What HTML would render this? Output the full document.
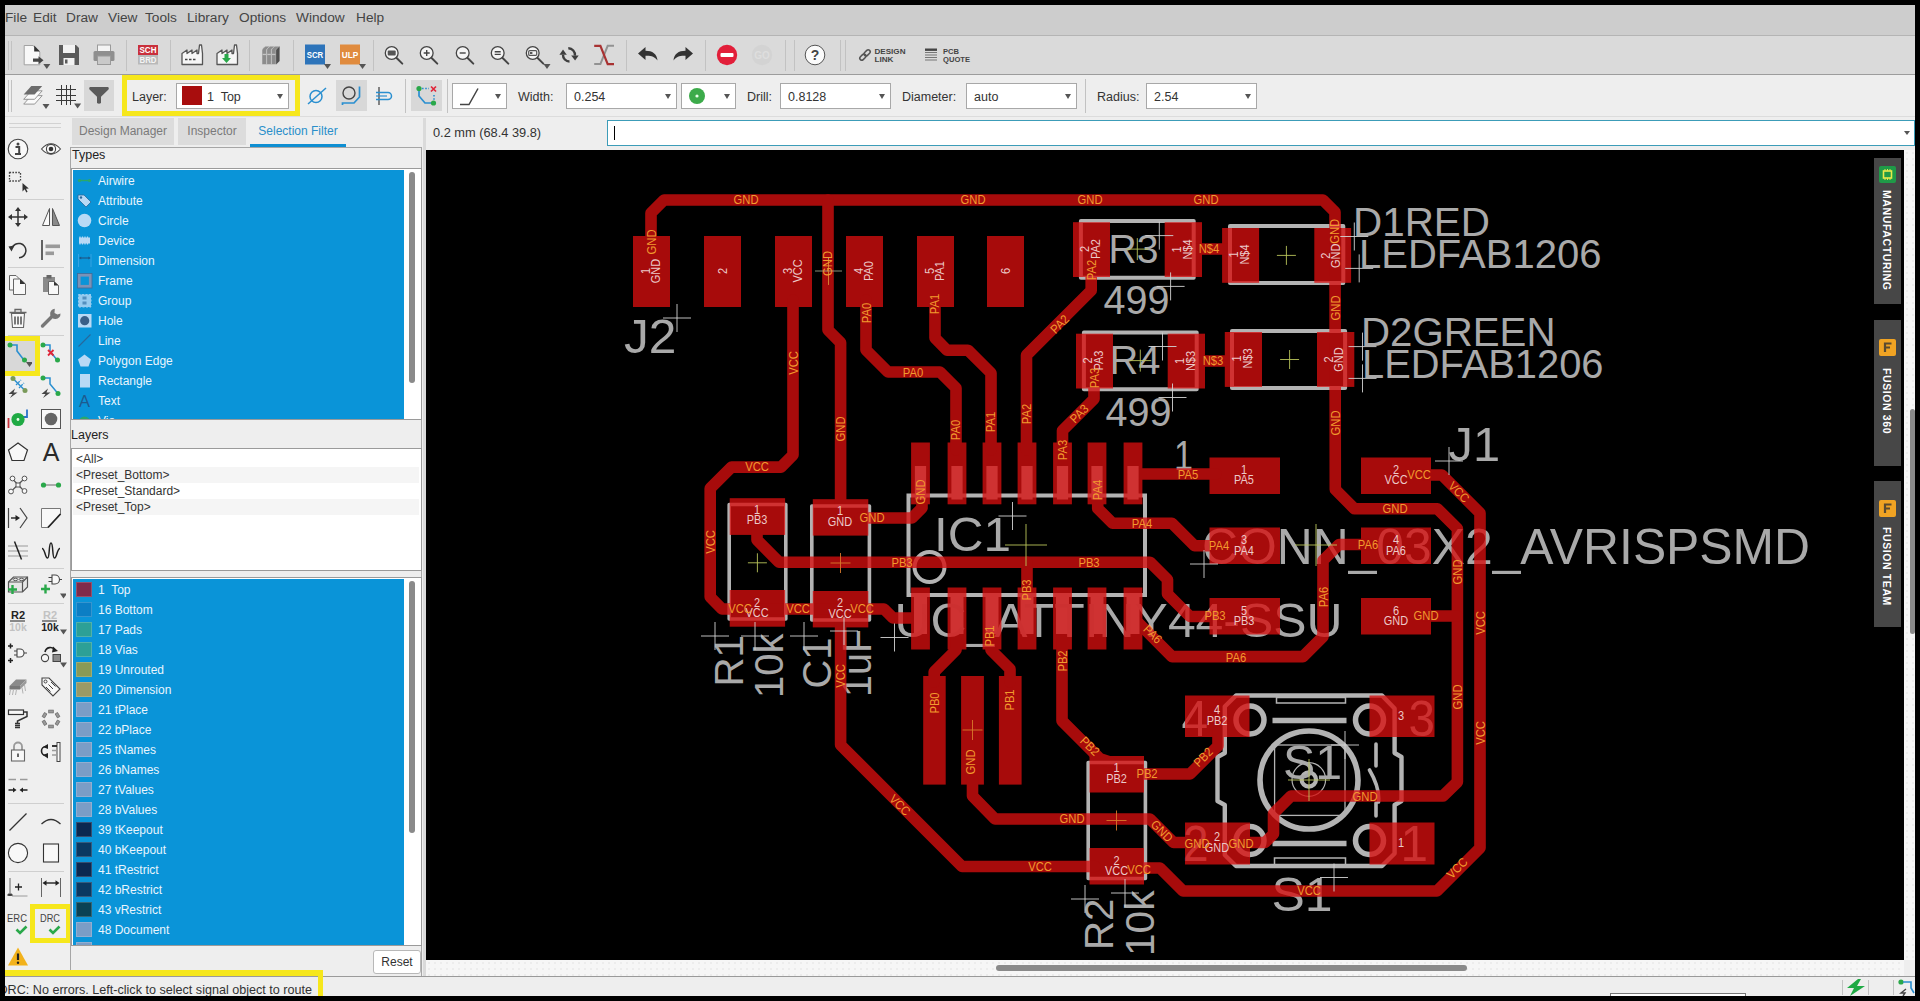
<!DOCTYPE html>
<html lang="en"><head><meta charset="utf-8"><title>EAGLE board editor</title>
<style>

html,body{margin:0;padding:0;background:#000;}
body{width:1920px;height:1001px;overflow:hidden;font-family:"Liberation Sans", sans-serif;font-size:12px;color:#333;}
#win{position:absolute;left:0;top:0;width:1920px;height:1001px;background:#000;overflow:hidden;}
.abs{position:absolute;}
.menubar{left:5px;top:5px;width:1910px;height:30px;background:#cdcdcd;}
.menubar span{position:absolute;top:4.5px;font-size:13.7px;color:#444;white-space:nowrap;}
.tb1{left:5px;top:35px;width:1910px;height:39px;background:#dadada;border-top:1px solid #b4b4b4;box-sizing:border-box;}
.tb2{left:5px;top:74px;width:1910px;height:43px;background:#eeeeee;border-top:1px solid #9c9c9c;border-bottom:1px solid #dcdcdc;box-sizing:border-box;}
.sep{position:absolute;width:1px;background:#c2c2c2;}
.ico{position:absolute;}
.combo{position:absolute;top:83px;height:26px;background:#fff;border:1px solid #a8a8a8;box-sizing:border-box;font-size:12.5px;line-height:26px;color:#333;}
.combo i{position:absolute;right:5px;top:10px;width:0;height:0;border-left:3.5px solid transparent;border-right:3.5px solid transparent;border-top:5px solid #555;}
.lbl{position:absolute;top:89.5px;font-size:12.5px;color:#333;white-space:nowrap;}
.pressed{position:absolute;background:#d8d8d8;}
.ybox{position:absolute;border:5px solid #f6e71c;box-sizing:border-box;}
.body{left:5px;top:117px;width:1910px;height:860px;background:#eeeeee;}
.palette{left:5px;top:117px;width:65px;height:860px;background:#efefef;}
.psep{position:absolute;left:8px;width:56px;height:1px;background:#cfcfcf;}
.tab{position:absolute;top:118px;height:27px;background:#dcdcdc;color:#7a7a7a;font-size:12px;line-height:26px;text-align:center;}
.list{position:absolute;background:#fff;border:1px solid #9a9a9a;box-sizing:border-box;overflow:hidden;}
.sel{position:absolute;left:1px;top:1px;width:331px;background:#0a94d8;}
.row{position:absolute;left:0;height:20px;line-height:20px;width:330px;color:#e9f5fd;font-size:12px;white-space:nowrap;}
.row b{position:absolute;left:2px;top:2px;width:15.5px;height:15px;font-weight:normal;}
.row span{position:absolute;left:24px;top:0;}
.thumb{position:absolute;width:6px;border-radius:3px;background:#8a8a8a;}
.prow{position:absolute;left:1px;width:346px;height:16px;line-height:16px;font-size:12px;color:#333;padding-left:3px;box-sizing:border-box;white-space:nowrap;}
.status{left:5px;top:976px;width:1910px;height:20px;background:#eeeeee;border-top:1px solid #9a9a9a;box-sizing:border-box;}
.vtab{position:absolute;left:1874px;width:27px;background:#474747;}
.vtab span{position:absolute;left:6px;top:0;transform-origin:0 0;transform:rotate(90deg) translate(0,-14px);color:#fff;font-weight:bold;font-size:10.5px;letter-spacing:0.6px;white-space:nowrap;line-height:14px;}
.dots{background-color:#f6f6f6;background-image:radial-gradient(#ececec 1px,transparent 1.3px);background-size:6px 6px;}
.frame{position:absolute;left:0;top:0;width:1920px;height:1001px;box-sizing:border-box;border:5px solid #000;border-bottom-width:5px;pointer-events:none;}

</style></head>
<body>
<div id="win">
<div class="abs body"></div><div class="abs menubar"><span style="left:0px">File</span><span style="left:28px">Edit</span><span style="left:61px">Draw</span><span style="left:103px">View</span><span style="left:140px">Tools</span><span style="left:182px">Library</span><span style="left:234px">Options</span><span style="left:291px">Window</span><span style="left:351px">Help</span></div><div class="abs tb1"></div><div class="sep" style="left:8px;top:41px;height:29px"></div><div class="sep" style="left:11px;top:41px;height:29px"></div><div class="sep" style="left:126px;top:40px;height:31px"></div><div class="sep" style="left:170px;top:40px;height:31px"></div><div class="sep" style="left:249px;top:40px;height:31px"></div><div class="sep" style="left:293px;top:40px;height:31px"></div><div class="sep" style="left:373px;top:40px;height:31px"></div><div class="sep" style="left:626px;top:40px;height:31px"></div><div class="sep" style="left:705px;top:40px;height:31px"></div><div class="sep" style="left:785px;top:40px;height:31px"></div><div class="sep" style="left:794px;top:40px;height:31px"></div><div class="sep" style="left:840px;top:40px;height:31px"></div><div class="sep" style="left:845px;top:40px;height:31px"></div><svg class="ico" style="left:16.0px;top:41.0px" width="36" height="30" viewBox="-18.0 -15.0 36 30"><path d="M-9.8 -10.5H-1L5.8 -4V8.8H-9.8z" fill="#f8f8f8" stroke="#9a9a9a" stroke-width="0.9"/><path d="M0.2 -10.5V-4.6H6z" fill="#333"/><path d="M-1 2.6H4.5V0.2L9.5 4.2 4.5 8.2V5.8H-1z" fill="#444"/><path d="M9.3 8h7l-3.5 5z" fill="#555"/></svg><svg class="ico" style="left:56.0px;top:42.0px" width="26" height="26" viewBox="-13.0 -13.0 26 26"><path d="M-10 -10H7L10 -7V10H-10z" fill="#5a5a5a"/><rect x="-6" y="-10" width="12" height="8" fill="#f2f2f2"/><rect x="-5.5" y="3" width="11" height="7" fill="#f2f2f2"/><rect x="-4" y="4.5" width="2.5" height="4" fill="#5a5a5a"/></svg><svg class="ico" style="left:90.0px;top:42.0px" width="28" height="26" viewBox="-14.0 -13.0 28 26"><rect x="-6.5" y="-10" width="13" height="7" fill="#f4f4f4" stroke="#9a9a9a" stroke-width="1"/><rect x="-10.5" y="-4" width="21" height="10" rx="1.5" fill="#8f8f8f"/><rect x="-6.5" y="1" width="13" height="8.5" fill="#c9c9c9" stroke="#9a9a9a" stroke-width="1"/></svg><svg class="ico" style="left:137.0px;top:44.0px" width="22" height="22" viewBox="-11.0 -11.0 22 22"><rect x="-10" y="-10" width="20" height="10" fill="#c9303c"/><rect x="-10" y="0" width="20" height="9.5" fill="#b9b9b9"/><text x="0" y="-1.6" font-family="Liberation Sans, sans-serif" font-size="8.6" font-weight="bold" fill="#fff" text-anchor="middle" textLength="17" lengthAdjust="spacingAndGlyphs">SCH</text><text x="0" y="8" font-family="Liberation Sans, sans-serif" font-size="8.6" font-weight="bold" fill="#f4f4f4" text-anchor="middle" textLength="17" lengthAdjust="spacingAndGlyphs">BRD</text></svg><svg class="ico" style="left:179.0px;top:42.0px" width="26" height="26" viewBox="-13.0 -13.0 26 26"><path d="M-10 9.5V-1.5L-5 -5V-1.5L0 -5V-1.5L5 -5V-1.5H6.5L7.5 -10H9.5L10.5 -1.5V9.5z" fill="#f6f6f6" stroke="#555" stroke-width="1.3" stroke-linejoin="round"/><path d="M-7 4.5H-4.5M-3 4.5H-0.5M1 4.5H3.5" stroke="#444" stroke-width="1.6"/></svg><svg class="ico" style="left:214.0px;top:42.0px" width="26" height="26" viewBox="-13.0 -13.0 26 26"><path d="M-10 9.5V-1.5L-5 -5V-1.5L0 -5V-1.5L5 -5V-1.5H6.5L7.5 -10H9.5L10.5 -1.5V9.5z" fill="#f6f6f6" stroke="#555" stroke-width="1.3" stroke-linejoin="round"/><path d="M-2.5 -1H1.5V3H4L-0.5 8-5 3H-2.5z" fill="#2aa84a"/></svg><svg class="ico" style="left:258.0px;top:43.0px" width="26" height="26" viewBox="-13.0 -13.0 26 26"><path d="M-9 -5.5Q-9 -7 -7.8 -8L-5.5 -9.8H-0.8000000000000007L-4.3 -6.3V8.5H-9z" fill="#8c8c8c" stroke="#d9d9d9" stroke-width="0.5"/><rect x="-8.4" y="-2.2" width="3.5" height="1.3" fill="#c4c4c4"/><path d="M-4.3 -5.5Q-4.3 -7 -3.0999999999999996 -8L-0.7999999999999998 -9.8H3.8999999999999995L0.40000000000000036 -6.3V8.5H-4.3z" fill="#8c8c8c" stroke="#d9d9d9" stroke-width="0.5"/><rect x="-3.6999999999999997" y="-2.2" width="3.5" height="1.3" fill="#c4c4c4"/><path d="M0.4 -5.5Q0.4 -7 1.6 -8L3.9 -9.8H8.6L5.1000000000000005 -6.3V8.5H0.4z" fill="#8c8c8c" stroke="#d9d9d9" stroke-width="0.5"/><rect x="1.0" y="-2.2" width="3.5" height="1.3" fill="#c4c4c4"/><path d="M5.1 -6.3L8.6 -9.8V5L5.1 8.5z" fill="#4f4f4f"/></svg><svg class="ico" style="left:297.0px;top:40.0px" width="36" height="30" viewBox="-18.0 -15.0 36 30"><rect x="-10" y="-10.5" width="20" height="20" fill="#2d74ba"/><text x="0" y="3.2" font-family="Liberation Sans, sans-serif" font-size="9" font-weight="bold" fill="#fff" text-anchor="middle" textLength="16.5" lengthAdjust="spacingAndGlyphs">SCR</text><path d="M9.0 9h7l-3.5 5z" fill="#555"/></svg><svg class="ico" style="left:332.0px;top:40.0px" width="36" height="30" viewBox="-18.0 -15.0 36 30"><rect x="-10" y="-10.5" width="20" height="20" fill="#e08b3e"/><text x="0" y="3.2" font-family="Liberation Sans, sans-serif" font-size="9" font-weight="bold" fill="#fff" text-anchor="middle" textLength="16.5" lengthAdjust="spacingAndGlyphs">ULP</text><path d="M9.0 9h7l-3.5 5z" fill="#555"/></svg><svg class="ico" style="left:376.0px;top:40.0px" width="34" height="30" viewBox="-17.0 -15.0 34 30"><circle cx="-1.3" cy="-2" r="6.4" fill="#f4f4f4" stroke="#444" stroke-width="1.3"/><path d="M3.6 3L9.3 8.6" stroke="#444" stroke-width="2" stroke-linecap="round"/><rect x="-5.3" y="-4.6" width="8" height="5" rx="1" fill="#555"/></svg><svg class="ico" style="left:411.0px;top:40.0px" width="34" height="30" viewBox="-17.0 -15.0 34 30"><circle cx="-1.3" cy="-2" r="6.4" fill="#f4f4f4" stroke="#444" stroke-width="1.3"/><path d="M3.6 3L9.3 8.6" stroke="#444" stroke-width="2" stroke-linecap="round"/><path d="M-4.3 -2h6M-1.3 -5v6" stroke="#444" stroke-width="1.4"/></svg><svg class="ico" style="left:447.0px;top:40.0px" width="34" height="30" viewBox="-17.0 -15.0 34 30"><circle cx="-1.3" cy="-2" r="6.4" fill="#f4f4f4" stroke="#444" stroke-width="1.3"/><path d="M3.6 3L9.3 8.6" stroke="#444" stroke-width="2" stroke-linecap="round"/><path d="M-4.3 -2h6" stroke="#444" stroke-width="1.4"/></svg><svg class="ico" style="left:482.0px;top:40.0px" width="34" height="30" viewBox="-17.0 -15.0 34 30"><circle cx="-1.3" cy="-2" r="6.4" fill="#f4f4f4" stroke="#444" stroke-width="1.3"/><path d="M3.6 3L9.3 8.6" stroke="#444" stroke-width="2" stroke-linecap="round"/><path d="M-4.3 -3.3h6M-4.3 -0.6h6" stroke="#444" stroke-width="1.4"/></svg><svg class="ico" style="left:517.0px;top:40.0px" width="34" height="30" viewBox="-17.0 -15.0 34 30"><circle cx="-1.3" cy="-2" r="6.4" fill="#f4f4f4" stroke="#444" stroke-width="1.3"/><path d="M3.6 3L9.3 8.6" stroke="#444" stroke-width="2" stroke-linecap="round"/><rect x="-5.3" y="-4.4" width="8" height="4.8" rx="1" fill="none" stroke="#555" stroke-width="1.2"/><rect x="-4" y="-3" width="2.4" height="2" fill="#555"/><path d="M9.5 9h7l-3.5 5z" fill="#555"/></svg><svg class="ico" style="left:556.0px;top:42.3px" width="26" height="26" viewBox="-13.0 -13.0 26 26"><path d="M0.5 6.5A6.5 6.5 0 0 1 -6 -0.2" fill="none" stroke="#3f3f3f" stroke-width="2.4"/><path d="M-9.6 -0.3L-6 -5.6 -2.2 -0.3z" fill="#3f3f3f"/><path d="M-0.7 -6.7A6.5 6.5 0 0 1 5.9 0.6" fill="none" stroke="#3f3f3f" stroke-width="2.4"/><path d="M2.2 0.4L9.7 0.4 6.1 5.4z" fill="#3f3f3f"/></svg><svg class="ico" style="left:591.0px;top:42.0px" width="26" height="26" viewBox="-13.0 -13.0 26 26"><path d="M-9.8 9.1H-3.6L3.7 -9.2H10" fill="none" stroke="#929292" stroke-width="2"/><path d="M-9.8 -9.2H-3.6L3.7 9.1H10" fill="none" stroke="#a83232" stroke-width="2.2"/></svg><svg class="ico" style="left:635.0px;top:44.0px" width="26" height="22" viewBox="-13.0 -11.0 26 22"><g><path d="M-10 -1.5L-2.5 -8V-4.2C4.5 -4.2 9 -1 9.5 5.5 6.5 1.5 3 0.5 -2.5 0.8V5z" fill="#333"/></g></svg><svg class="ico" style="left:670.0px;top:44.0px" width="26" height="22" viewBox="-13.0 -11.0 26 22"><g transform="scale(-1,1)"><path d="M-10 -1.5L-2.5 -8V-4.2C4.5 -4.2 9 -1 9.5 5.5 6.5 1.5 3 0.5 -2.5 0.8V5z" fill="#333"/></g></svg><svg class="ico" style="left:715.0px;top:43.0px" width="24" height="24" viewBox="-12.0 -12.0 24 24"><circle r="10.2" fill="#e21f3a"/><rect x="-6.5" y="-2" width="13" height="4" rx="1" fill="#fff"/></svg><svg class="ico" style="left:750.0px;top:43.0px" width="24" height="24" viewBox="-12.0 -12.0 24 24"><circle r="10.2" fill="#d3d3d3"/><text x="0" y="3.6" font-family="Liberation Sans, sans-serif" font-size="10" font-weight="bold" fill="#dedede" text-anchor="middle">GO</text></svg><svg class="ico" style="left:803.0px;top:43.0px" width="24" height="24" viewBox="-12.0 -12.0 24 24"><circle r="9.8" fill="#fbfbfb" stroke="#555" stroke-width="1"/><text x="0" y="5" font-family="Liberation Sans, sans-serif" font-size="14" font-weight="bold" fill="#444" text-anchor="middle">?</text></svg><svg class="ico" style="left:852.0px;top:43.0px" width="70" height="24" viewBox="-35.0 -12.0 70 24"><g transform="translate(-22,0) rotate(-45)" fill="none" stroke="#555" stroke-width="1.5"><rect x="-6.5" y="-2" width="7" height="4" rx="2"/><rect x="-0.5" y="-2" width="7" height="4" rx="2"/></g><text x="-12.5" y="-0.8" font-family="Liberation Sans, sans-serif" font-size="7.6" font-weight="bold" fill="#444" textLength="31" lengthAdjust="spacingAndGlyphs">DESIGN</text><text x="-12.5" y="6.6" font-family="Liberation Sans, sans-serif" font-size="7.6" font-weight="bold" fill="#444" textLength="19" lengthAdjust="spacingAndGlyphs">LINK</text></svg><svg class="ico" style="left:919.0px;top:43.0px" width="64" height="24" viewBox="-32.0 -12.0 64 24"><g transform="translate(-20,0)"><rect x="-6" y="-6.5" width="12" height="2.4" fill="#444"/><path d="M-6 -2.5h12M-6 0h12M-6 2.5h12M-6 5h12" stroke="#777" stroke-width="1"/></g><text x="-8" y="-0.8" font-family="Liberation Sans, sans-serif" font-size="7.6" font-weight="bold" fill="#444" textLength="16" lengthAdjust="spacingAndGlyphs">PCB</text><text x="-8" y="6.6" font-family="Liberation Sans, sans-serif" font-size="7.6" font-weight="bold" fill="#444" textLength="27" lengthAdjust="spacingAndGlyphs">QUOTE</text></svg><div class="abs tb2"></div><div class="sep" style="left:8px;top:80px;height:32px"></div><div class="sep" style="left:11px;top:80px;height:32px"></div><div class="sep" style="left:405px;top:79px;height:34px"></div><div class="sep" style="left:447px;top:79px;height:34px"></div><div class="sep" style="left:1085px;top:79px;height:34px"></div><div class="pressed" style="left:84px;top:80px;width:30px;height:31px"></div><div class="pressed" style="left:336px;top:80px;width:31px;height:31px"></div><div class="pressed" style="left:411px;top:80px;width:31px;height:31px"></div><svg class="ico" style="left:16.0px;top:81.0px" width="34" height="30" viewBox="-17.0 -15.0 34 30"><path d="M-9.3 -1.5L-1.7 -10H9.2L1.6 -1.5z" transform="translate(0,9.6)" fill="#fafafa" stroke="#8c8c8c" stroke-width="0.9"/><path d="M-9.3 -1.5L-1.7 -10H9.2L1.6 -1.5z" transform="translate(0,4.8)" fill="#fafafa" stroke="#8c8c8c" stroke-width="0.9"/><path d="M-9.3 -1.5L-1.7 -10H9.2L1.6 -1.5z" fill="#6c6c6c"/><path d="M9.5 8h7l-3.5 5z" fill="#555"/></svg><svg class="ico" style="left:49.400000000000006px;top:80.4px" width="34" height="30" viewBox="-17.0 -15.0 34 30"><path d="M-4.9 -10V10M0 -10V10M4.9 -10V10M-10 -5.2H9.5M-10 0H9.5M-10 5H9.5" stroke="#3a3a3a" stroke-width="1" shape-rendering="crispEdges"/><path d="M8.1 8.6h7l-3.5 5z" fill="#555"/></svg><svg class="ico" style="left:86.0px;top:83.0px" width="26" height="26" viewBox="-13.0 -13.0 26 26"><path d="M-9 -9H9Q10.5 -8.5 9.5 -6.5L2 0.8V7Q0 8.3 -2 7V0.8L-9.5 -6.5Q-10.5 -8.5 -9 -9z" fill="#5a5a5a"/></svg><div class="ybox" style="left:122px;top:75px;width:178px;height:41px"></div><div class="lbl" style="left:132px">Layer:</div><div class="combo" style="left:176px;width:113px"><span style="position:absolute;left:7px"></span><b style="position:absolute;left:5px;top:2px;width:20px;height:19px;background:#a80d0d"></b><span style="position:absolute;left:30px">1&nbsp; Top</span><i></i></div><svg class="ico" style="left:304.0px;top:83.0px" width="26" height="26" viewBox="-13.0 -13.0 26 26"><circle cx="-1" cy="0.5" r="6" fill="none" stroke="#2a8fd0" stroke-width="1.5"/><path d="M-9 8L9 -8" stroke="#2a8fd0" stroke-width="1.5"/></svg><svg class="ico" style="left:338.0px;top:83.0px" width="26" height="26" viewBox="-13.0 -13.0 26 26"><circle cx="-2" cy="-3" r="6" fill="none" stroke="#444" stroke-width="1.4"/><path d="M8.5 -9.5V1L3 7H-8.5V9" fill="none" stroke="#2a8fd0" stroke-width="1.7"/></svg><svg class="ico" style="left:371.0px;top:83.0px" width="26" height="26" viewBox="-13.0 -13.0 26 26"><path d="M-5 -9V9" stroke="#555" stroke-width="1.4"/><path d="M-8 -3.5H4A3.5 3.5 0 0 1 4 3.5H-8" fill="none" stroke="#2a8fd0" stroke-width="1.5"/><path d="M-8 0H3" stroke="#2a8fd0" stroke-width="1.2"/></svg><svg class="ico" style="left:412.0px;top:82.0px" width="28" height="28" viewBox="-14.0 -14.0 28 28"><path d="M-7 -7V0L-1 7H7" fill="none" stroke="#2a8fd0" stroke-width="1.7"/><path d="M-4 -7.5H3M8 -1V4" stroke="#2a8fd0" stroke-width="1.6" stroke-dasharray="1.6 1.6"/><circle cx="-7" cy="-7.5" r="2.6" fill="#2aa84a"/><circle cx="7.5" cy="7" r="2.6" fill="#2aa84a"/><path d="M5 -9.5L10 -4.5M10 -9.5L5 -4.5" stroke="#e0263a" stroke-width="1.7"/></svg><div class="combo" style="left:452px;width:55px"><span style="position:absolute;left:7px"></span><svg style="position:absolute;left:5px;top:3px" width="28" height="19"><path d="M2 17.5H11L20 1.5" fill="none" stroke="#444" stroke-width="1.5"/></svg><i></i></div><div class="lbl" style="left:518px">Width:</div><div class="combo" style="left:566px;width:111px"><span style="position:absolute;left:7px">0.254</span><i></i></div><div class="combo" style="left:681px;width:55px"><span style="position:absolute;left:7px"></span><svg style="position:absolute;left:6px;top:3px" width="18" height="18"><circle cx="9" cy="9" r="8" fill="#3cab4a"/><circle cx="9" cy="9" r="1.6" fill="#e8ffe8"/></svg><i></i></div><div class="lbl" style="left:747px">Drill:</div><div class="combo" style="left:780px;width:111px"><span style="position:absolute;left:7px">0.8128</span><i></i></div><div class="lbl" style="left:902px">Diameter:</div><div class="combo" style="left:966px;width:111px"><span style="position:absolute;left:7px">auto</span><i></i></div><div class="lbl" style="left:1097px">Radius:</div><div class="combo" style="left:1146px;width:111px"><span style="position:absolute;left:7px">2.54</span><i></i></div><div class="abs palette"></div><div class="psep" style="left:9px;width:52px;top:123px;background:#d2d2d2"></div><div class="psep" style="left:9px;width:52px;top:127px;background:#d2d2d2"></div><div class="psep" style="top:199px"></div><div class="psep" style="top:267px"></div><div class="psep" style="top:335px"></div><div class="psep" style="top:568px"></div><div class="psep" style="top:603px"></div><div class="psep" style="top:803px"></div><div class="psep" style="top:871px"></div><div class="pressed" style="left:5px;top:340px;width:30px;height:31px"></div><div class="ybox" style="left:0px;top:336px;width:40px;height:40px"></div><div class="ybox" style="left:30px;top:904px;width:41px;height:39px"></div><svg class="ico" style="left:6.0px;top:137.0px" width="24" height="24" viewBox="-12.0 -12.0 24 24"><circle r="9.8" fill="#f8f8f8" stroke="#444" stroke-width="1.1"/><circle cx="0" cy="-5" r="1.5" fill="#444"/><path d="M-2.5 -2H1.2V4.5M-3 5h6" fill="none" stroke="#444" stroke-width="2"/></svg><svg class="ico" style="left:39.0px;top:137.0px" width="24" height="24" viewBox="-12.0 -12.0 24 24"><path d="M-9.5 0Q0 -10.5 9.5 0Q0 10.5 -9.5 0z" fill="#f8f8f8" stroke="#444" stroke-width="1.1"/><circle r="4.6" fill="none" stroke="#444" stroke-width="1.1"/><circle r="2.3" fill="#333"/></svg><svg class="ico" style="left:6.0px;top:169.0px" width="24" height="24" viewBox="-12.0 -12.0 24 24"><rect x="-8.5" y="-8.5" width="11" height="8.5" fill="none" stroke="#444" stroke-width="1.3" stroke-dasharray="1.6 1.3"/><path d="M4.5 2L4.5 10.5 6.7 8.3 8.3 11.5 9.6 10.8 8 7.8 10.8 7.6z" fill="#333"/></svg><svg class="ico" style="left:6.0px;top:205.0px" width="24" height="24" viewBox="-12.0 -12.0 24 24"><path d="M-7 0H7M0 -7V7" stroke="#333" stroke-width="1.5"/><path d="M-10 0L-6 -3V3zM10 0L6 -3V3zM0 -10L-3 -6H3zM0 10L-3 6H3z" fill="#333"/></svg><svg class="ico" style="left:39.0px;top:205.0px" width="24" height="24" viewBox="-12.0 -12.0 24 24"><path d="M-1.5 -8.5V8.5H-8.5z" fill="#fafafa" stroke="#555" stroke-width="1"/><path d="M1.5 -8.5V8.5H8.5z" fill="#8a8a8a" stroke="#555" stroke-width="1"/></svg><svg class="ico" style="left:6.0px;top:238.0px" width="24" height="24" viewBox="-12.0 -12.0 24 24"><path d="M-6 -2A7.2 7.2 0 1 1 1 7.8" fill="none" stroke="#333" stroke-width="1.5"/><path d="M-9.5 -3.5L-3.5 -4.5 -6.5 1.5z" fill="#333"/></svg><svg class="ico" style="left:39.0px;top:238.0px" width="24" height="24" viewBox="-12.0 -12.0 24 24"><path d="M-9 -10V10" stroke="#333" stroke-width="1.5"/><rect x="-5.5" y="-5.5" width="14.5" height="3.6" fill="#9a9a9a"/><rect x="-5.5" y="1.5" width="8.5" height="3.6" fill="#9a9a9a"/></svg><svg class="ico" style="left:6.0px;top:273.0px" width="24" height="24" viewBox="-12.0 -12.0 24 24"><path d="M-8.5 -9.5H-2L1 -6.5V5H-8.5z" fill="#f8f8f8" stroke="#666" stroke-width="1"/><path d="M-4.5 -6H2L7.5 -1V9.5H-4.5z" fill="#f8f8f8" stroke="#666" stroke-width="1"/><path d="M2 -6V-1H7.5z" fill="#333"/></svg><svg class="ico" style="left:39.0px;top:273.0px" width="24" height="24" viewBox="-12.0 -12.0 24 24"><rect x="-8" y="-8" width="12" height="15" fill="#8a8a8a"/><rect x="-4.5" y="-10" width="5" height="3.5" fill="#666"/><path d="M-2.5 -3.5H3L7.5 0.5V9.5H-2.5z" fill="#f8f8f8" stroke="#666" stroke-width="1"/><path d="M3 -3.5V0.5H7.5z" fill="#333"/></svg><svg class="ico" style="left:6.0px;top:306.0px" width="24" height="24" viewBox="-12.0 -12.0 24 24"><path d="M-6.5 -4.5L-5.5 9.5H5.5L6.5 -4.5z" fill="#f8f8f8" stroke="#666" stroke-width="1.1"/><path d="M-8.5 -5.5H8.5M-3 -5.5V-8.5H3V-5.5" fill="none" stroke="#666" stroke-width="1.3"/><path d="M-3 -1.5V6.5M0 -1.5V6.5M3 -1.5V6.5" stroke="#444" stroke-width="1.4"/></svg><svg class="ico" style="left:39.0px;top:306.0px" width="24" height="24" viewBox="-12.0 -12.0 24 24"><path d="M-8.5 8L2 -2.5" stroke="#777" stroke-width="3.4" stroke-linecap="round"/><path d="M9.5 -4.5A5.2 5.2 0 1 1 3.8 -9.3L3.5 -5 6.5 -3.5z" fill="#777"/></svg><svg class="ico" style="left:4.0px;top:340.0px" width="28" height="28" viewBox="-14.0 -14.0 28 28"><path d="M-8 -9H-1V-3L5.5 5.5" fill="none" stroke="#2a8fd0" stroke-width="1.6"/><circle cx="-8" cy="-9" r="2.5" fill="#2aa84a"/><circle cx="6.5" cy="6" r="2.5" fill="#2aa84a"/><path d="M8.0 8h7l-3.5 5z" fill="#555"/></svg><svg class="ico" style="left:37.0px;top:340.0px" width="28" height="28" viewBox="-14.0 -14.0 28 28"><path d="M-8 -9H-1V-3L6 6" fill="none" stroke="#2a8fd0" stroke-width="1.5"/><circle cx="-8" cy="-9" r="2.5" fill="#2aa84a"/><circle cx="6.5" cy="6" r="2.5" fill="#2aa84a"/><path d="M-3 -4L2.5 1.5M2.5 -4L-3 1.5" stroke="#e0263a" stroke-width="1.8"/></svg><svg class="ico" style="left:4.0px;top:372.0px" width="28" height="28" viewBox="-14.0 -14.0 28 28"><path d="M-4.5 -7L6 3.5" stroke="#2a8fd0" stroke-width="1.5"/><path d="M-2 -1L3 -6M1 2L6 -3" stroke="#2a8fd0" stroke-width="1.3" stroke-dasharray="2 1.2"/><circle cx="-5" cy="-7.5" r="2.5" fill="#7a9a5a"/><circle cx="7" cy="4.5" r="2.5" fill="#7a9a5a"/><path d="M-3 2.5L-9.5 8H-5.5L-8 12 -0.5 6.5H-4.5z" fill="#444"/></svg><svg class="ico" style="left:37.0px;top:372.0px" width="28" height="28" viewBox="-14.0 -14.0 28 28"><path d="M-8 -8H-1V-2L6.5 7" fill="none" stroke="#2a8fd0" stroke-width="1.5"/><circle cx="-8" cy="-8" r="2.5" fill="#2aa84a"/><circle cx="7" cy="7.5" r="2.5" fill="#2aa84a"/><path d="M-3 2.5L-9.5 8H-5.5L-8 12 -0.5 6.5H-4.5z" fill="#444"/></svg><svg class="ico" style="left:5.0px;top:406.0px" width="26" height="26" viewBox="-13.0 -13.0 26 26"><path d="M9 -9.5V-2H5" fill="none" stroke="#2a72c8" stroke-width="1.8"/><path d="M-9.5 -1V9" stroke="#c8323c" stroke-width="1.8"/><circle cx="0" cy="0.5" r="6.6" fill="#1faa44"/><circle cx="0" cy="0.5" r="1.4" fill="#e8ffe8"/></svg><svg class="ico" style="left:39.0px;top:407.0px" width="24" height="24" viewBox="-12.0 -12.0 24 24"><rect x="-9.5" y="-9.5" width="19" height="19" fill="#f8f8f8" stroke="#555" stroke-width="1"/><circle r="6.3" fill="#666"/></svg><svg class="ico" style="left:6.0px;top:440.0px" width="24" height="24" viewBox="-12.0 -12.0 24 24"><path d="M0 -9L9.5 -2 6 8.5H-6L-9.5 -2z" fill="#f8f8f8" stroke="#333" stroke-width="1.2"/></svg><svg class="ico" style="left:38.0px;top:439.0px" width="26" height="26" viewBox="-13.0 -13.0 26 26"><text x="0" y="9" font-family="Liberation Sans, sans-serif" font-size="25" font-weight="normal" fill="#2a2a2a" text-anchor="middle" >A</text></svg><svg class="ico" style="left:6.0px;top:473.0px" width="24" height="24" viewBox="-12.0 -12.0 24 24"><path d="M-6 -6.5L6 6M6.5 -6.5L-7 6.5" stroke="#555" stroke-width="1.2"/><circle cx="-5.5" cy="-6.5" r="2.4" fill="#f8f8f8" stroke="#555"/><circle cx="6.5" cy="-6.5" r="2.4" fill="#f8f8f8" stroke="#555"/><circle cx="-7" cy="6.5" r="2.4" fill="#f8f8f8" stroke="#555"/><circle cx="6.5" cy="6" r="2.4" fill="#f8f8f8" stroke="#555"/><rect x="-2" y="-2" width="4" height="4" fill="#f8f8f8" stroke="#555"/></svg><svg class="ico" style="left:39.0px;top:473.0px" width="24" height="24" viewBox="-12.0 -12.0 24 24"><path d="M-7 0H7" stroke="#888" stroke-width="1.3"/><circle cx="-7.5" r="2.6" fill="#2aa84a"/><circle cx="7.5" r="2.6" fill="#2aa84a"/></svg><svg class="ico" style="left:6.0px;top:506.0px" width="24" height="24" viewBox="-12.0 -12.0 24 24"><path d="M-9.5 -10V10" stroke="#444" stroke-width="1.2"/><path d="M2 -10L9 0 2 10" fill="none" stroke="#444" stroke-width="1.2"/><path d="M-7 0H0" stroke="#222" stroke-width="1.4"/><path d="M-2.5 -3L2 0-2.5 3z" fill="#222"/></svg><svg class="ico" style="left:39.0px;top:506.0px" width="24" height="24" viewBox="-12.0 -12.0 24 24"><path d="M-9.5 -9.5H9.5V-4L-3 9.5H-9.5z" fill="#f8f8f8" stroke="#777" stroke-width="1"/><path d="M-3 9.5L9.5 -4" stroke="#222" stroke-width="1.8"/></svg><svg class="ico" style="left:6.0px;top:539.0px" width="24" height="24" viewBox="-12.0 -12.0 24 24"><path d="M-10 -5H10M-10 0H10M-10 5H10" stroke="#9a9a9a" stroke-width="1.2"/><path d="M-3.5 -9.5L3.5 8.5" stroke="#222" stroke-width="1.5"/></svg><svg class="ico" style="left:39.0px;top:539.0px" width="24" height="24" viewBox="-12.0 -12.0 24 24"><path d="M-9 -2.5C-6 -2.5 -6 7 -3.5 7S-2.5 -8 0 -8 1 7 3.5 7 6 -2.5 9 -2.5" fill="none" stroke="#222" stroke-width="1.5"/></svg><svg class="ico" style="left:5.0px;top:572.0px" width="26" height="26" viewBox="-13.0 -13.0 26 26"><path d="M-9.5 -3L-4.5 -8H9.5V2L4.5 7H-9.5z" fill="#e6e6e6" stroke="#555" stroke-width="1.2"/><path d="M-9.5 -3H4.5V7M4.5 -3L9.5 -8" fill="none" stroke="#555" stroke-width="1.2"/><ellipse cx="-2.5" cy="-5.6" rx="2.3" ry="1.2" fill="none" stroke="#555"/><ellipse cx="3.5" cy="-5.6" rx="2.3" ry="1.2" fill="none" stroke="#555"/><path d="M-10 4.5H-1M-5.5 0V9" stroke="#2aa84a" stroke-width="2.4"/></svg><svg class="ico" style="left:36.0px;top:571.0px" width="30" height="28" viewBox="-15.0 -14.0 30 28"><path d="M1 -10H4A4.5 4.5 0 0 1 4 -1H1z" fill="#f8f8f8" stroke="#444" stroke-width="1.1"/><path d="M-2.5 -7.5H1M-2.5 -3.5H1M8.5 -5.5H11" stroke="#444" stroke-width="1.1"/><path d="M-10 4H-1M-5.5 -0.5V8.5" stroke="#2aa84a" stroke-width="2.4"/><path d="M9.0 8.5h7l-3.5 5z" fill="#555"/></svg><svg class="ico" style="left:5.0px;top:608.0px" width="26" height="26" viewBox="-13.0 -13.0 26 26"><text x="0" y="-2" font-family="Liberation Sans, sans-serif" font-size="11" font-weight="bold" fill="#222" text-anchor="middle" >R2</text><path d="M-8 0H7" stroke="#222" stroke-width="1"/><text x="0" y="9.5" font-family="Liberation Sans, sans-serif" font-size="10.5" font-weight="bold" fill="#c2c2c2" text-anchor="middle" >10k</text></svg><svg class="ico" style="left:35.0px;top:607.0px" width="32" height="28" viewBox="-16.0 -14.0 32 28"><text x="-1" y="-2" font-family="Liberation Sans, sans-serif" font-size="11" font-weight="bold" fill="#c2c2c2" text-anchor="middle" >R2</text><path d="M-9 0H6" stroke="#222" stroke-width="1"/><text x="-1" y="9.5" font-family="Liberation Sans, sans-serif" font-size="10.5" font-weight="bold" fill="#222" text-anchor="middle" >10k</text><path d="M9.0 8.5h7l-3.5 5z" fill="#555"/></svg><svg class="ico" style="left:5.0px;top:641.0px" width="26" height="26" viewBox="-13.0 -13.0 26 26"><path d="M-1 -5H2A4 4 0 0 1 2 3H-1z" fill="#f8f8f8" stroke="#444" stroke-width="1.1"/><path d="M-4 -3H-1M-4 1H-1M6 -1H9" stroke="#444" stroke-width="1.1"/><path d="M-10 -8H-5M-7.5 -10.5V-5.5M-10 6.5H-5M-7.5 4V9" stroke="#222" stroke-width="1.5"/></svg><svg class="ico" style="left:35.0px;top:640.0px" width="32" height="28" viewBox="-16.0 -14.0 32 28"><circle cx="-6" cy="4" r="3.6" fill="#f8f8f8" stroke="#444" stroke-width="1.1"/><rect x="2" y="0.5" width="7.5" height="7" fill="#8a8a8a" stroke="#444" stroke-width="1"/><path d="M-6 -2A5.5 5.5 0 0 1 4 -4" fill="none" stroke="#222" stroke-width="1.6"/><path d="M2 -7.5L7 -3 1 -1.5z" fill="#222"/><path d="M9.0 8.5h7l-3.5 5z" fill="#555"/></svg><svg class="ico" style="left:5.0px;top:674.0px" width="26" height="26" viewBox="-13.0 -13.0 26 26"><path d="M-8.5 -1L-2 -7.5H8.5L2 -1z" fill="#8a8a8a"/><path d="M-8.5 -1H2V2.5H-8.5z" fill="#777"/><path d="M2 -1L8.5 -7.5V-4L2 2.5z" fill="#999"/><path d="M-7.5 2.5L-8.5 8M-4.5 2.5L-5.5 8M-1.5 2.5L-2.5 8M4 0.5L5 6.5M6.5 -2L7.5 4" stroke="#b2b2b2" stroke-width="1"/></svg><svg class="ico" style="left:38.0px;top:674.0px" width="26" height="26" viewBox="-13.0 -13.0 26 26"><path d="M-9 -9H-2L9 2 2 9 -9 -2z" fill="#f8f8f8" stroke="#444" stroke-width="1.1"/><circle cx="-5.5" cy="-5.5" r="1.5" fill="none" stroke="#444"/><path d="M-2.5 -2.5L2 2M0 -5L4.5 -0.5M-5 0L-0.5 4.5" stroke="#444" stroke-width="1"/></svg><svg class="ico" style="left:5.0px;top:706.0px" width="26" height="26" viewBox="-13.0 -13.0 26 26"><rect x="-9.5" y="-9" width="15" height="4.5" fill="#f8f8f8" stroke="#333" stroke-width="1.2"/><path d="M5.5 -7H9V-2.5L-0.5 2V4" fill="none" stroke="#333" stroke-width="1.5"/><path d="M-3 4.5H2M-3 6.5H2M-3 8.5H2" stroke="#333" stroke-width="1.3"/></svg><svg class="ico" style="left:38.0px;top:706.0px" width="26" height="26" viewBox="-13.0 -13.0 26 26"><rect x="-2.3" y="-1.4" width="4.6" height="2.8" fill="#9a9a9a" stroke="#666" stroke-width="0.7" transform="translate(0.0,-7.5) rotate(0)"/><rect x="-2.3" y="-1.4" width="4.6" height="2.8" fill="#9a9a9a" stroke="#666" stroke-width="0.7" transform="translate(6.5,-3.8) rotate(60)"/><rect x="-2.3" y="-1.4" width="4.6" height="2.8" fill="#9a9a9a" stroke="#666" stroke-width="0.7" transform="translate(6.5,3.7) rotate(120)"/><rect x="-2.3" y="-1.4" width="4.6" height="2.8" fill="#9a9a9a" stroke="#666" stroke-width="0.7" transform="translate(0.0,7.5) rotate(180)"/><rect x="-2.3" y="-1.4" width="4.6" height="2.8" fill="#9a9a9a" stroke="#666" stroke-width="0.7" transform="translate(-6.5,3.8) rotate(240)"/><rect x="-2.3" y="-1.4" width="4.6" height="2.8" fill="#9a9a9a" stroke="#666" stroke-width="0.7" transform="translate(-6.5,-3.8) rotate(300)"/></svg><svg class="ico" style="left:6.0px;top:740.0px" width="24" height="24" viewBox="-12.0 -12.0 24 24"><path d="M-4 -2V-5.5A4 4 0 0 1 4 -5.5V-2" fill="none" stroke="#9a9a9a" stroke-width="1.8"/><rect x="-6.5" y="-2" width="13" height="11" fill="#f8f8f8" stroke="#666" stroke-width="1.1"/><rect x="-0.8" y="1.5" width="1.6" height="3.5" fill="#444"/></svg><svg class="ico" style="left:38.0px;top:739.0px" width="26" height="26" viewBox="-13.0 -13.0 26 26"><rect x="6" y="-9.5" width="3" height="19" fill="#f8f8f8" stroke="#444" stroke-width="1"/><path d="M1 -6H6" stroke="#222" stroke-width="1.8"/><path d="M1 -1.5H6M1 3H6" stroke="#9a9a9a" stroke-width="1.6"/><path d="M-5 -5.5A4.5 4.5 0 0 0 -5 3.5" fill="none" stroke="#222" stroke-width="1.6"/><path d="M-8 -5L-3 -8V-3zM-8 3L-3 6.5V1z" fill="#222"/></svg><svg class="ico" style="left:6.0px;top:773.0px" width="24" height="24" viewBox="-12.0 -12.0 24 24"><path d="M-9.5 -5.5H-2M2 -5.5H9.5" stroke="#9a9a9a" stroke-width="1.5"/><path d="M-9.5 5H-4M9.5 5H4" stroke="#222" stroke-width="1.4"/><path d="M-1.5 5L-5 2.5V7.5zM1.5 5L5 2.5V7.5z" fill="#222"/></svg><svg class="ico" style="left:6.0px;top:810.0px" width="24" height="24" viewBox="-12.0 -12.0 24 24"><path d="M-8.5 8.5L8.5 -8.5" stroke="#333" stroke-width="1.2"/></svg><svg class="ico" style="left:39.0px;top:810.0px" width="24" height="24" viewBox="-12.0 -12.0 24 24"><path d="M-9.5 2Q0 -7 9.5 2" fill="none" stroke="#333" stroke-width="1.3"/></svg><svg class="ico" style="left:6.0px;top:841.0px" width="24" height="24" viewBox="-12.0 -12.0 24 24"><circle r="9.6" fill="#f8f8f8" stroke="#333" stroke-width="1.1"/></svg><svg class="ico" style="left:39.0px;top:841.0px" width="24" height="24" viewBox="-12.0 -12.0 24 24"><rect x="-7.5" y="-9" width="15" height="18" fill="#f8f8f8" stroke="#333" stroke-width="1.1"/></svg><svg class="ico" style="left:6.0px;top:875.0px" width="24" height="24" viewBox="-12.0 -12.0 24 24"><path d="M-8 -9V9M-10 7H-6" stroke="#666" stroke-width="1"/><path d="M-6 9H9.5" stroke="#9a9a9a" stroke-width="1"/><path d="M-3 0H4M0.5 -3.5V3.5M-10.5 8H-5.5" stroke="#222" stroke-width="1.3"/></svg><svg class="ico" style="left:39.0px;top:875.0px" width="24" height="24" viewBox="-12.0 -12.0 24 24"><path d="M-9.5 -9V10M9.5 -9V10" stroke="#666" stroke-width="1"/><path d="M-6 -4H6" stroke="#222" stroke-width="1.4"/><path d="M-8.5 -4L-4.5 -6.8V-1.2zM8.5 -4L4.5 -6.8V-1.2z" fill="#222"/></svg><svg class="ico" style="left:4.0px;top:909.0px" width="28" height="26" viewBox="-14.0 -13.0 28 26"><text x="-1" y="0" font-family="Liberation Sans, sans-serif" font-size="11" font-weight="normal" fill="#444" text-anchor="middle" textLength="20" lengthAdjust="spacingAndGlyphs">ERC</text><g transform="translate(3,3)"><path d="M-4.5 4.5L-1 8 5.5 1.5" fill="none" stroke="#2aa84a" stroke-width="2.6"/></g></svg><svg class="ico" style="left:37.0px;top:909.0px" width="28" height="26" viewBox="-14.0 -13.0 28 26"><text x="-1" y="0" font-family="Liberation Sans, sans-serif" font-size="11" font-weight="normal" fill="#444" text-anchor="middle" textLength="20" lengthAdjust="spacingAndGlyphs">DRC</text><g transform="translate(3,3)"><path d="M-4.5 4.5L-1 8 5.5 1.5" fill="none" stroke="#2aa84a" stroke-width="2.6"/></g></svg><svg class="ico" style="left:6.0px;top:945.0px" width="24" height="24" viewBox="-12.0 -12.0 24 24"><path d="M0 -9.5L10 8.5H-10z" fill="#f2b21c"/><path d="M0 -3.5V3" stroke="#222" stroke-width="2.2"/><circle cx="0" cy="5.8" r="1.2" fill="#222"/></svg><div class="tab" style="left:72px;width:102px">Design Manager</div><div class="tab" style="left:178px;width:68px">Inspector</div><div class="abs" style="left:250px;top:118px;width:96px;height:26px;line-height:26px;text-align:center;color:#2a8fca;font-size:12px">Selection Filter</div><div class="abs" style="left:250px;top:144px;width:96px;height:3px;background:#0f8fd2"></div><div class="abs" style="left:70px;top:147px;width:352px;height:830px;border:1px solid #a6a6a6;border-bottom:none;box-sizing:border-box;background:#eeeeee"></div><div class="abs" style="left:72px;top:148px;font-size:12.5px;line-height:14px;color:#222">Types</div><div class="list" style="left:71px;top:168px;width:351px;height:252px"><div class="sel" style="height:249px"></div><div class="row" style="top:2px;left:2px"><svg style="position:absolute;left:3px;top:2px" width="16" height="16"><path d="M2 7.5h11" stroke="#2aa86a" stroke-width="1.4"/><circle cx="2.5" cy="7.5" r="1.6" fill="#2aa86a"/><circle cx="12.5" cy="7.5" r="1.6" fill="#2aa86a"/></svg><span>Airwire</span></div><div class="row" style="top:22px;left:2px"><svg style="position:absolute;left:3px;top:2px" width="16" height="16"><path d="M1 2h6l7 7-5 5-8-8z" fill="#b9d9f5" stroke="#27689c" stroke-width="0.8"/><circle cx="4" cy="4.5" r="1.2" fill="#27689c"/></svg><span>Attribute</span></div><div class="row" style="top:42px;left:2px"><svg style="position:absolute;left:3px;top:2px" width="16" height="16"><circle cx="7.5" cy="7.5" r="6.8" fill="#b9d9f5"/></svg><span>Circle</span></div><div class="row" style="top:62px;left:2px"><svg style="position:absolute;left:3px;top:2px" width="16" height="16"><rect x="2" y="4.5" width="11" height="6" fill="#b9d9f5"/><path d="M3 3.5v2M5.5 3.5v2M8 3.5v2M10.5 3.5v2M3 9.5v2M5.5 9.5v2M8 9.5v2M10.5 9.5v2" stroke="#b9d9f5" stroke-width="1.2"/></svg><span>Device</span></div><div class="row" style="top:82px;left:2px"><svg style="position:absolute;left:3px;top:2px" width="16" height="16"><path d="M1.5 1v13M14 1v13" stroke="#3aa4e4" stroke-width="0.9"/><path d="M3 5h9.5" stroke="#1d5a8c" stroke-width="1.2"/><path d="M1.8 5l2.4-1.6v3.2zM13.7 5l-2.4-1.6v3.2z" fill="#1d5a8c"/></svg><span>Dimension</span></div><div class="row" style="top:102px;left:2px"><svg style="position:absolute;left:3px;top:2px" width="16" height="16"><rect x="0.5" y="0.5" width="14.5" height="14.5" fill="#7d92b6" stroke="#3f6a98" stroke-width="0.8"/><rect x="3.6" y="3.6" width="8.3" height="8.3" fill="#0a94d8"/></svg><span>Frame</span></div><div class="row" style="top:122px;left:2px"><svg style="position:absolute;left:3px;top:2px" width="16" height="16"><rect x="1.5" y="1.5" width="12.5" height="12.5" fill="#b9d9f5" opacity="0.8" stroke="#b9d9f5" stroke-dasharray="2 1.5"/><rect x="5.5" y="3.5" width="4" height="3" fill="#27689c" opacity="0.6"/><rect x="5.5" y="8.5" width="4" height="3" fill="#27689c" opacity="0.6"/></svg><span>Group</span></div><div class="row" style="top:142px;left:2px"><svg style="position:absolute;left:3px;top:2px" width="16" height="16"><rect x="1" y="1" width="13.5" height="13.5" fill="#b9d9f5"/><circle cx="7.7" cy="7.7" r="4.6" fill="#3a5f88"/></svg><span>Hole</span></div><div class="row" style="top:162px;left:2px"><svg style="position:absolute;left:3px;top:2px" width="16" height="16"><path d="M1.5 13.5L13.5 1.5" stroke="#27689c" stroke-width="1.1"/></svg><span>Line</span></div><div class="row" style="top:182px;left:2px"><svg style="position:absolute;left:3px;top:2px" width="16" height="16"><path d="M7.5 1.5L14 6.5 11.5 13.5H3.5L1 6.5z" fill="#b9d9f5"/></svg><span>Polygon Edge</span></div><div class="row" style="top:202px;left:2px"><svg style="position:absolute;left:3px;top:2px" width="16" height="16"><rect x="3" y="1" width="10" height="13.5" fill="#b9d9f5"/></svg><span>Rectangle</span></div><div class="row" style="top:222px;left:2px"><svg style="position:absolute;left:3px;top:2px" width="16" height="16"><text x="7.5" y="14" font-family="Liberation Sans, sans-serif" font-size="16.5" fill="#1e5a8e" text-anchor="middle">A</text></svg><span>Text</span></div><div class="row" style="top:242px;left:2px"><svg style="position:absolute;left:3px;top:2px" width="16" height="16"><circle cx="7.5" cy="9" r="5.5" fill="#2aa86a"/></svg><span>Via</span></div><div class="thumb" style="left:337px;top:3px;height:211px"></div></div><div class="abs" style="left:71px;top:428px;font-size:12.5px;line-height:14px;color:#222">Layers</div><div class="list" style="left:71px;top:448px;width:351px;height:123px"><div class="prow" style="top:2px;background:#fff">&lt;All&gt;</div><div class="prow" style="top:18px;background:#f5f5f5">&lt;Preset_Bottom&gt;</div><div class="prow" style="top:34px;background:#fff">&lt;Preset_Standard&gt;</div><div class="prow" style="top:50px;background:#f5f5f5">&lt;Preset_Top&gt;</div></div><div class="list" style="left:71px;top:577px;width:351px;height:369px"><div class="sel" style="height:366px"></div><div class="row" style="top:2px;left:2px"><b style="background:#802a4a;box-shadow:inset 0 0 0 1px rgba(255,255,255,0.18)"></b><span>1&nbsp; Top</span></div><div class="row" style="top:22px;left:2px"><b style="background:#0c7ec4;box-shadow:inset 0 0 0 1px rgba(255,255,255,0.18)"></b><span>16 Bottom</span></div><div class="row" style="top:42px;left:2px"><b style="background:#2da096;box-shadow:inset 0 0 0 1px rgba(255,255,255,0.18)"></b><span>17 Pads</span></div><div class="row" style="top:62px;left:2px"><b style="background:#2da096;box-shadow:inset 0 0 0 1px rgba(255,255,255,0.18)"></b><span>18 Vias</span></div><div class="row" style="top:82px;left:2px"><b style="background:#8a9a56;box-shadow:inset 0 0 0 1px rgba(255,255,255,0.18)"></b><span>19 Unrouted</span></div><div class="row" style="top:102px;left:2px"><b style="background:#9a9a66;box-shadow:inset 0 0 0 1px rgba(255,255,255,0.18)"></b><span>20 Dimension</span></div><div class="row" style="top:122px;left:2px"><b style="background:#7b9dc6;box-shadow:inset 0 0 0 1px rgba(255,255,255,0.18)"></b><span>21 tPlace</span></div><div class="row" style="top:142px;left:2px"><b style="background:#7b9dc6;box-shadow:inset 0 0 0 1px rgba(255,255,255,0.18)"></b><span>22 bPlace</span></div><div class="row" style="top:162px;left:2px"><b style="background:#7b9dc6;box-shadow:inset 0 0 0 1px rgba(255,255,255,0.18)"></b><span>25 tNames</span></div><div class="row" style="top:182px;left:2px"><b style="background:#7b9dc6;box-shadow:inset 0 0 0 1px rgba(255,255,255,0.18)"></b><span>26 bNames</span></div><div class="row" style="top:202px;left:2px"><b style="background:#7b9dc6;box-shadow:inset 0 0 0 1px rgba(255,255,255,0.18)"></b><span>27 tValues</span></div><div class="row" style="top:222px;left:2px"><b style="background:#7b9dc6;box-shadow:inset 0 0 0 1px rgba(255,255,255,0.18)"></b><span>28 bValues</span></div><div class="row" style="top:242px;left:2px"><b style="background:#0b2850;box-shadow:inset 0 0 0 1px rgba(255,255,255,0.18)"></b><span>39 tKeepout</span></div><div class="row" style="top:262px;left:2px"><b style="background:#0a3862;box-shadow:inset 0 0 0 1px rgba(255,255,255,0.18)"></b><span>40 bKeepout</span></div><div class="row" style="top:282px;left:2px"><b style="background:#0b2850;box-shadow:inset 0 0 0 1px rgba(255,255,255,0.18)"></b><span>41 tRestrict</span></div><div class="row" style="top:302px;left:2px"><b style="background:#0a3862;box-shadow:inset 0 0 0 1px rgba(255,255,255,0.18)"></b><span>42 bRestrict</span></div><div class="row" style="top:322px;left:2px"><b style="background:#0a4254;box-shadow:inset 0 0 0 1px rgba(255,255,255,0.18)"></b><span>43 vRestrict</span></div><div class="row" style="top:342px;left:2px"><b style="background:#7b9dc6;box-shadow:inset 0 0 0 1px rgba(255,255,255,0.18)"></b><span>48 Document</span></div><div class="row" style="top:362px;left:2px"><b style="background:#7b9dc6;box-shadow:inset 0 0 0 1px rgba(255,255,255,0.18)"></b><span>49 Reference</span></div><div class="thumb" style="left:337px;top:3px;height:252px"></div></div><div class="abs" style="left:373px;top:950px;width:48px;height:24px;background:#fff;border:1px solid #b8b8b8;border-radius:3px;box-sizing:border-box;text-align:center;line-height:22px;font-size:12px;color:#333">Reset</div><div class="abs" style="left:423px;top:118px;width:3px;height:859px;background:#dadada"></div><div class="abs" style="left:433px;top:125px;font-size:12.8px;line-height:16px;color:#333;white-space:nowrap">0.2 mm (68.4 39.8)</div><div class="abs" style="left:607px;top:120px;width:1308px;height:26px;background:#fff;border:1px solid #3c9cb8;box-sizing:border-box"></div><div class="abs" style="left:614px;top:126px;width:1px;height:14px;background:#000"></div><div class="abs" style="left:1904px;top:131px;width:0;height:0;border-left:3px solid transparent;border-right:3px solid transparent;border-top:4px solid #555"></div><div class="abs dots" style="left:1904px;top:150px;width:11px;height:810px"></div><div class="abs" style="left:1910px;top:409px;width:5px;height:225px;border-radius:2.5px;background:#8a8a8a"></div><div class="abs dots" style="left:426px;top:960px;width:1478px;height:16px"></div><div class="abs" style="left:1904px;top:960px;width:11px;height:16px;background:#eeeeee"></div><div class="abs" style="left:996px;top:965px;width:471px;height:6px;border-radius:3px;background:#8a8a8a"></div><div class="abs status"></div><div class="abs" style="left:5px;top:978px;width:313px;height:18px;overflow:hidden"><div style="position:absolute;left:-6.5px;top:4.5px;font-size:12.6px;line-height:15px;color:#333;white-space:nowrap">DRC: No errors. Left-click to select signal object to route</div></div><div class="abs" style="left:5px;top:970px;width:317.5px;height:5.5px;background:#f6e71c"></div><div class="abs" style="left:317.5px;top:970px;width:5px;height:26px;background:#f6e71c"></div><div class="sep" style="left:1842px;top:980px;height:15px"></div><div class="sep" style="left:1868px;top:980px;height:15px"></div><div class="sep" style="left:1893px;top:980px;height:15px"></div><svg class="abs" style="left:1845px;top:979px" width="24" height="17"><path d="M13 0L2 9h7l-4 8L20 7h-8l4-7z" fill="#1faa44"/></svg><svg class="abs" style="left:1895px;top:977px" width="20" height="19"><circle cx="6" cy="5" r="2.6" fill="#2aa84a"/><path d="M8 5h8v6l3 5" fill="none" stroke="#2a8fd0" stroke-width="1.6"/><path d="M11 12l-5 4h4l-2 3" fill="none" stroke="#444" stroke-width="1.4"/></svg><div class="abs" style="left:1610px;top:993px;width:136px;height:3px;background:#fff;border:1px solid #777;border-bottom:none;box-sizing:border-box"></div>
<svg class="abs" style="left:426px;top:150px" width="1478" height="810" viewBox="426 150 1478 810"><rect x="426" y="150" width="1478" height="810" fill="#000"/><g fill="none" stroke="#b3b3b3" stroke-width="4" stroke-linejoin="round"><rect x="1080.9" y="221" width="112.8" height="56.7"/><rect x="1083.9" y="332.5" width="112.8" height="56.7"/><rect x="1230" y="226" width="113.3" height="57"/><rect x="1232" y="331" width="113.1" height="57"/><rect x="729.2" y="504.5" width="56.6" height="114.5" stroke-width="3.6"/><rect x="811.8" y="506" width="57.6" height="114" stroke-width="3.6"/><rect x="1088.2" y="762.5" width="57.2" height="116" stroke-width="3.6"/></g><g fill="none" stroke="#b3b3b3" stroke-width="4"><rect x="908.5" y="495.5" width="236.5" height="99.5"/><circle cx="929.5" cy="567" r="15"/></g><g fill="#b3b3b3" stroke="none"><rect x="914.9" y="466" width="11.2" height="33.5"/><rect x="914.0" y="597" width="13" height="37"/><rect x="951.4" y="466" width="11.2" height="33.5"/><rect x="950.5" y="597" width="13" height="37"/><rect x="986.4" y="466" width="11.2" height="33.5"/><rect x="985.5" y="597" width="13" height="37"/><rect x="1021.4" y="466" width="11.2" height="33.5"/><rect x="1020.5" y="597" width="13" height="37"/><rect x="1056.9" y="466" width="11.2" height="33.5"/><rect x="1056.0" y="597" width="13" height="37"/><rect x="1091.4" y="466" width="11.2" height="33.5"/><rect x="1090.5" y="597" width="13" height="37"/><rect x="1127.4" y="466" width="11.2" height="33.5"/><rect x="1126.5" y="597" width="13" height="37"/></g><g fill="none" stroke="#b3b3b3" stroke-width="4.4" stroke-linejoin="round" stroke-linecap="round"><path d="M1236 695.5H1382L1394.6 708.5V753L1401.5 757V801L1394.6 805V853.5L1382 866H1236L1224.8 855V805L1217.5 801V757L1224.8 753V706.5z"/><circle cx="1309" cy="780" r="49" stroke-width="5.6"/><g stroke-width="5.5"><circle cx="1250" cy="720" r="14"/><circle cx="1369.5" cy="720" r="14"/><circle cx="1250" cy="840.5" r="14"/><circle cx="1369.5" cy="840.5" r="14"/><path d="M1272.5 720.4H1346.5M1272.5 843.5H1346.5" stroke-linecap="butt"/></g><path d="M1376 744V766M1369.5 770Q1380 788 1378.5 802M1376 803V816" stroke-width="3.6"/><circle cx="1308.8" cy="779.5" r="7.2" stroke-width="4.2"/></g><g fill="none" stroke="#b3b3b3" stroke-width="1.5"><rect x="1276.5" y="697.5" width="69" height="5.5"/><rect x="1274.5" y="858" width="71" height="7"/><rect x="1274.6" y="745" width="70.4" height="70.4" stroke-width="1.3"/><circle cx="1308.8" cy="779.5" r="16.8" stroke-width="1.2"/></g><g font-family="Liberation Sans, sans-serif" fill="#a9a9a9" stroke="none"><text x="624" y="353.2" font-size="47.7" textLength="52.5" lengthAdjust="spacingAndGlyphs">J2</text><text x="1108.5" y="262.7" font-size="40.1" textLength="50.0" lengthAdjust="spacingAndGlyphs">R3</text><text x="1103.5" y="314" font-size="40.1" textLength="66.0" lengthAdjust="spacingAndGlyphs">499</text><text x="1109.5" y="374.2" font-size="40.1" textLength="51.0" lengthAdjust="spacingAndGlyphs">R4</text><text x="1105.5" y="425.5" font-size="40.1" textLength="66.0" lengthAdjust="spacingAndGlyphs">499</text><text x="1353" y="236" font-size="41.0" textLength="137" lengthAdjust="spacingAndGlyphs">D1RED</text><text x="1359" y="268" font-size="41.0" textLength="242.5" lengthAdjust="spacingAndGlyphs">LEDFAB1206</text><text x="1361" y="346.2" font-size="41.0" textLength="194.5" lengthAdjust="spacingAndGlyphs">D2GREEN</text><text x="1362" y="378.2" font-size="41.0" textLength="241.5" lengthAdjust="spacingAndGlyphs">LEDFAB1206</text><text x="934" y="551" font-size="47.7" textLength="77" lengthAdjust="spacingAndGlyphs">IC1</text><text x="894.5" y="637" font-size="48.3" textLength="448.0" lengthAdjust="spacingAndGlyphs">UC_ATTINY44-SSU</text><text x="1174" y="470" font-size="42.2" textLength="19" lengthAdjust="spacingAndGlyphs">1</text><text x="1448.5" y="461.3" font-size="48.7" textLength="51.5" lengthAdjust="spacingAndGlyphs">J1</text><text x="1202" y="564.1" font-size="49.3" textLength="608" lengthAdjust="spacingAndGlyphs">CONN_03X2_AVRISPSMD</text><text x="1283" y="779" font-size="48.0" textLength="59" lengthAdjust="spacingAndGlyphs">S1</text><text x="1271.5" y="911" font-size="48.0" textLength="61.0" lengthAdjust="spacingAndGlyphs">S1</text><text x="1181.5" y="736" font-size="49.3" textLength="26.5" lengthAdjust="spacingAndGlyphs">4</text><text x="1408.5" y="736" font-size="49.3" textLength="26.5" lengthAdjust="spacingAndGlyphs">3</text><text x="1183" y="860.6" font-size="49.3" textLength="25.5" lengthAdjust="spacingAndGlyphs">2</text><text x="1400.5" y="861" font-size="49.3" textLength="27.5" lengthAdjust="spacingAndGlyphs">1</text><text transform="translate(742.5,686.5) rotate(-90)" x="0" y="0" font-size="41.0" textLength="51.5" lengthAdjust="spacingAndGlyphs">R1</text><text transform="translate(782.5,698) rotate(-90)" x="0" y="0" font-size="41.0" textLength="64.5" lengthAdjust="spacingAndGlyphs">10k</text><text transform="translate(831,688.5) rotate(-90)" x="0" y="0" font-size="41.0" textLength="51.0" lengthAdjust="spacingAndGlyphs">C1</text><text transform="translate(871,697) rotate(-90)" x="0" y="0" font-size="41.0" textLength="68" lengthAdjust="spacingAndGlyphs">1uF</text><text transform="translate(1112.5,950) rotate(-90)" x="0" y="0" font-size="41.0" textLength="51.5" lengthAdjust="spacingAndGlyphs">R2</text><text transform="translate(1154,956) rotate(-90)" x="0" y="0" font-size="41.0" textLength="65.5" lengthAdjust="spacingAndGlyphs">10k</text></g><g opacity="0.78"><g fill="#d70f0f" stroke="none"><rect x="633" y="236" width="37" height="71"/><rect x="704" y="236" width="37" height="71"/><rect x="775" y="236" width="37" height="71"/><rect x="846" y="236" width="37" height="71"/><rect x="917" y="236" width="37" height="71"/><rect x="987" y="236" width="37" height="71"/><rect x="1073" y="222.2" width="37" height="54.8"/><rect x="1164.7" y="222.2" width="37.3" height="54.8"/><rect x="1222.1" y="228" width="37" height="54.8"/><rect x="1314.3" y="228" width="36.8" height="54.8"/><rect x="1076" y="333.7" width="37" height="54.8"/><rect x="1167.7" y="333.7" width="37.3" height="54.8"/><rect x="1224.8" y="332" width="37.2" height="54.9"/><rect x="1317" y="332" width="37.3" height="54.9"/><rect x="729.7" y="498.2" width="55.4" height="36.7"/><rect x="729.7" y="590" width="55.4" height="36.7"/><rect x="812.8" y="499.2" width="55.5" height="36.4"/><rect x="812.8" y="591" width="55.5" height="36.4"/><rect x="911.1" y="442.5" width="18.8" height="61.8"/><rect x="911.1" y="587.5" width="18.8" height="62"/><rect x="947.6" y="442.5" width="18.8" height="61.8"/><rect x="947.6" y="587.5" width="18.8" height="62"/><rect x="982.6" y="442.5" width="18.8" height="61.8"/><rect x="982.6" y="587.5" width="18.8" height="62"/><rect x="1017.6" y="442.5" width="18.8" height="61.8"/><rect x="1017.6" y="587.5" width="18.8" height="62"/><rect x="1053.1" y="442.5" width="18.8" height="61.8"/><rect x="1053.1" y="587.5" width="18.8" height="62"/><rect x="1087.6" y="442.5" width="18.8" height="61.8"/><rect x="1087.6" y="587.5" width="18.8" height="62"/><rect x="1123.6" y="442.5" width="18.8" height="61.8"/><rect x="1123.6" y="587.5" width="18.8" height="62"/><rect x="1209.5" y="457.5" width="70.5" height="36.5"/><rect x="1361" y="457.5" width="70" height="36.5"/><rect x="1209.5" y="527.5" width="70.5" height="36.5"/><rect x="1361" y="527.5" width="70" height="36.5"/><rect x="1209.5" y="598" width="70.5" height="36.5"/><rect x="1361" y="598" width="70" height="36.5"/><rect x="923.2" y="676" width="22.5" height="108.6"/><rect x="961.1" y="676" width="22.8" height="108.6"/><rect x="998.9" y="676" width="22.7" height="108.6"/><rect x="1089.5" y="756" width="54.5" height="36.5"/><rect x="1089.5" y="848" width="54.5" height="36.5"/><rect x="1185" y="695.5" width="64.5" height="41.5"/><rect x="1369.5" y="695.5" width="65" height="41.5"/><rect x="1185" y="822.5" width="65" height="42"/><rect x="1369.5" y="822.5" width="65" height="42"/></g><g fill="none" stroke="#d70f0f" stroke-width="11.6" stroke-linejoin="round" stroke-linecap="round"><polyline points="651,245 651,213 664,200 1323,200 1335,212 1335.3,489.5 1354.5,508.8 1437.5,508.8 1457.4,528.7 1457.4,782 1443,796 1291,796 1273.5,813.5 1273.5,834 1265,842.5 1195,842.5"/><polyline points="828,200 828,330 840.6,342.6 840.6,505"/><polyline points="860,518 912,518 922,508 922,500"/><polyline points="1425,616 1457,616"/><polyline points="972.5,780 972.5,796 995,819 1150,819 1173.5,842.5 1195,842.5"/><polyline points="793,300 793,455 781,467.1 731.5,467.1 710.2,488.4 710.2,597 722,609 884,609 893,618 920,618"/><polyline points="840.6,620 840.6,745 962,866.5 1095,866.5"/><polyline points="1140,868 1160,868 1183,891 1437,891 1480,848 1480,513 1442,475 1425,475"/><polyline points="866,300 866,350 888,372 940,372 956,388 956,450"/><polyline points="935,300 935,338 947,350.2 968,350.2 991,373 991,450"/><polyline points="1091.2,272 1091.2,290.5 1026.5,355.2 1026.5,450"/><polyline points="1094,382 1094,399 1062.5,430.5 1062.5,450"/><polyline points="1097.7,498 1097.7,508.5 1112.5,523.25 1172,523.25 1194.5,545.75 1216,545.75"/><polyline points="1133,474 1216,474"/><polyline points="1133.5,618 1172,656.6 1303,656.6 1323,636.6 1323,560.5 1339,544.5 1368,544.5"/><polyline points="956,640 956,650 934.2,671.8 934.2,682"/><polyline points="991,640 991,650 1010,669 1010,682"/><polyline points="1062,640 1062,720.8 1100,758.8 1110,762"/><polyline points="1138,774 1190,774 1218,746 1218,732"/><polyline points="757,530 757,540 779,562.2 1150,562.2 1167.5,579.5 1167.5,594 1190,616.5 1216,616.5"/><polyline points="1027,562.2 1027,592"/><polyline points="1195,249 1229,249"/><polyline points="1198,361 1232,361"/></g></g><path d="M663 318H691M677 304V332" stroke="#d2d2d2" stroke-width="0.9" fill="none"/><path d="M1145.3 235.6H1173.3M1159.3 221.6V249.6" stroke="#d2d2d2" stroke-width="0.9" fill="none"/><path d="M1156.6 286.4H1184.6M1170.6 272.4V300.4" stroke="#d2d2d2" stroke-width="0.9" fill="none"/><path d="M1148.5 346.5H1176.5M1162.5 332.5V360.5" stroke="#d2d2d2" stroke-width="0.9" fill="none"/><path d="M1158.5 397.5H1186.5M1172.5 383.5V411.5" stroke="#d2d2d2" stroke-width="0.9" fill="none"/><path d="M1340.3 236.5H1368.3M1354.3 222.5V250.5" stroke="#d2d2d2" stroke-width="0.9" fill="none"/><path d="M1345.2 268.4H1373.2M1359.2 254.39999999999998V282.4" stroke="#d2d2d2" stroke-width="0.9" fill="none"/><path d="M1348.5 346.6H1376.5M1362.5 332.6V360.6" stroke="#d2d2d2" stroke-width="0.9" fill="none"/><path d="M1348.5 378.4H1376.5M1362.5 364.4V392.4" stroke="#d2d2d2" stroke-width="0.9" fill="none"/><path d="M998.5 516H1026.5M1012.5 502V530" stroke="#d2d2d2" stroke-width="0.9" fill="none"/><path d="M1190 564H1218M1204 550V578" stroke="#d2d2d2" stroke-width="0.9" fill="none"/><path d="M1435 461H1463M1449 447V475" stroke="#d2d2d2" stroke-width="0.9" fill="none"/><path d="M701 636H729M715 622V650" stroke="#d2d2d2" stroke-width="0.9" fill="none"/><path d="M741 636H769M755 622V650" stroke="#d2d2d2" stroke-width="0.9" fill="none"/><path d="M790 636H818M804 622V650" stroke="#d2d2d2" stroke-width="0.9" fill="none"/><path d="M830 631H858M844 617V645" stroke="#d2d2d2" stroke-width="0.9" fill="none"/><path d="M880.5 637.5H908.5M894.5 623.5V651.5" stroke="#d2d2d2" stroke-width="0.9" fill="none"/><path d="M1071 899H1099M1085 885V913" stroke="#d2d2d2" stroke-width="0.9" fill="none"/><path d="M1111 893H1139M1125 879V907" stroke="#d2d2d2" stroke-width="0.9" fill="none"/><path d="M1320 877.5H1348M1334 863.5V891.5" stroke="#d2d2d2" stroke-width="0.9" fill="none"/><path d="M1331 745H1359M1345 731V759" stroke="#d2d2d2" stroke-width="0.9" fill="none"/><path d="M1276.9 255.4H1295.9M1286.4 245.9V264.9" stroke="#b9c45a" stroke-width="0.9" fill="none"/><path d="M1280.1 359.5H1299.1M1289.6 350.0V369.0" stroke="#b9c45a" stroke-width="0.9" fill="none"/><path d="M747.9 562.8H766.9M757.4 553.3V572.3" stroke="#b9c45a" stroke-width="0.9" fill="none"/><path d="M1126.3 249.1H1148.3M1137.3 238.1V260.1" stroke="#b9c45a" stroke-width="0.9" fill="none"/><path d="M1129.3 360.6H1151.3M1140.3 349.6V371.6" stroke="#b9c45a" stroke-width="0.9" fill="none"/><path d="M1005 545H1047M1026 524V566" stroke="#b9c45a" stroke-width="0.9" fill="none"/><path d="M1295 545H1337M1316 524V566" stroke="#b9c45a" stroke-width="0.9" fill="none"/><path d="M1288 780H1330M1309 759V801" stroke="#b9c45a" stroke-width="0.9" fill="none"/><path d="M830.5 563H850.5M840.5 553V573" stroke="#d8782a" stroke-width="0.9" fill="none"/><path d="M1106.5 820.5H1126.5M1116.5 810.5V830.5" stroke="#d8782a" stroke-width="0.9" fill="none"/><path d="M962.5 730H982.5M972.5 720V740" stroke="#d8782a" stroke-width="0.9" fill="none"/><path d="M815.0 271H842.0M828.5 257.5V284.5" stroke="#98a088" stroke-width="0.9" fill="none"/><path d="M828.5 259V285" stroke="#d8782a" stroke-width="0.9"/><g font-family="Liberation Sans, sans-serif" stroke="none"><text transform="translate(645.5 271) rotate(-90) scale(0.9 1)" x="0" y="4.4" font-size="12.2" fill="#ecc9c9" text-anchor="middle">1</text><text transform="translate(655.8 271) rotate(-90) scale(0.9 1)" x="0" y="4.4" font-size="12.2" fill="#ecc9c9" text-anchor="middle">GND</text><text transform="translate(722.5 271) rotate(-90) scale(0.9 1)" x="0" y="4.4" font-size="12.2" fill="#ecc9c9" text-anchor="middle">2</text><text transform="translate(787.5 271) rotate(-90) scale(0.9 1)" x="0" y="4.4" font-size="12.2" fill="#ecc9c9" text-anchor="middle">3</text><text transform="translate(797.8 271) rotate(-90) scale(0.9 1)" x="0" y="4.4" font-size="12.2" fill="#ecc9c9" text-anchor="middle">VCC</text><text transform="translate(858.5 271) rotate(-90) scale(0.9 1)" x="0" y="4.4" font-size="12.2" fill="#ecc9c9" text-anchor="middle">4</text><text transform="translate(868.8 271) rotate(-90) scale(0.9 1)" x="0" y="4.4" font-size="12.2" fill="#ecc9c9" text-anchor="middle">PA0</text><text transform="translate(929.5 271) rotate(-90) scale(0.9 1)" x="0" y="4.4" font-size="12.2" fill="#ecc9c9" text-anchor="middle">5</text><text transform="translate(939.8 271) rotate(-90) scale(0.9 1)" x="0" y="4.4" font-size="12.2" fill="#ecc9c9" text-anchor="middle">PA1</text><text transform="translate(1005.5 271) rotate(-90) scale(0.9 1)" x="0" y="4.4" font-size="12.2" fill="#ecc9c9" text-anchor="middle">6</text><text transform="translate(1085 249) rotate(-90) scale(0.9 1)" x="0" y="4.4" font-size="12.2" fill="#ecc9c9" text-anchor="middle">2</text><text transform="translate(1095.3 249) rotate(-90) scale(0.9 1)" x="0" y="4.4" font-size="12.2" fill="#ecc9c9" text-anchor="middle">PA2</text><text transform="translate(1177 249.5) rotate(-90) scale(0.9 1)" x="0" y="4.4" font-size="12.2" fill="#ecc9c9" text-anchor="middle">1</text><text transform="translate(1187.3 249.5) rotate(-90) scale(0.9 1)" x="0" y="4.4" font-size="12.2" fill="#ecc9c9" text-anchor="middle">N$4</text><text transform="translate(1234 254.5) rotate(-90) scale(0.9 1)" x="0" y="4.4" font-size="12.2" fill="#ecc9c9" text-anchor="middle">1</text><text transform="translate(1244.3 254.5) rotate(-90) scale(0.9 1)" x="0" y="4.4" font-size="12.2" fill="#ecc9c9" text-anchor="middle">N$4</text><text transform="translate(1325.5 255.8) rotate(-90) scale(0.9 1)" x="0" y="4.4" font-size="12.2" fill="#ecc9c9" text-anchor="middle">2</text><text transform="translate(1335.8 255.8) rotate(-90) scale(0.9 1)" x="0" y="4.4" font-size="12.2" fill="#ecc9c9" text-anchor="middle">GND</text><text transform="translate(1088 360.5) rotate(-90) scale(0.9 1)" x="0" y="4.4" font-size="12.2" fill="#ecc9c9" text-anchor="middle">2</text><text transform="translate(1098.3 360.5) rotate(-90) scale(0.9 1)" x="0" y="4.4" font-size="12.2" fill="#ecc9c9" text-anchor="middle">PA3</text><text transform="translate(1180 361) rotate(-90) scale(0.9 1)" x="0" y="4.4" font-size="12.2" fill="#ecc9c9" text-anchor="middle">1</text><text transform="translate(1190.3 361) rotate(-90) scale(0.9 1)" x="0" y="4.4" font-size="12.2" fill="#ecc9c9" text-anchor="middle">N$3</text><text transform="translate(1237 358.5) rotate(-90) scale(0.9 1)" x="0" y="4.4" font-size="12.2" fill="#ecc9c9" text-anchor="middle">1</text><text transform="translate(1247.3 358.5) rotate(-90) scale(0.9 1)" x="0" y="4.4" font-size="12.2" fill="#ecc9c9" text-anchor="middle">N$3</text><text transform="translate(1328.5 359.5) rotate(-90) scale(0.9 1)" x="0" y="4.4" font-size="12.2" fill="#ecc9c9" text-anchor="middle">2</text><text transform="translate(1338.8 359.5) rotate(-90) scale(0.9 1)" x="0" y="4.4" font-size="12.2" fill="#ecc9c9" text-anchor="middle">GND</text><text transform="translate(757 509.6) rotate(0) scale(0.9 1)" x="0" y="4.4" font-size="12.2" fill="#ecc9c9" text-anchor="middle">1</text><text transform="translate(757 519.9) rotate(0) scale(0.9 1)" x="0" y="4.4" font-size="12.2" fill="#ecc9c9" text-anchor="middle">PB3</text><text transform="translate(757 602.5) rotate(0) scale(0.9 1)" x="0" y="4.4" font-size="12.2" fill="#ecc9c9" text-anchor="middle">2</text><text transform="translate(757 612.8) rotate(0) scale(0.9 1)" x="0" y="4.4" font-size="12.2" fill="#ecc9c9" text-anchor="middle">VCC</text><text transform="translate(840 511) rotate(0) scale(0.9 1)" x="0" y="4.4" font-size="12.2" fill="#ecc9c9" text-anchor="middle">1</text><text transform="translate(840 521.3) rotate(0) scale(0.9 1)" x="0" y="4.4" font-size="12.2" fill="#ecc9c9" text-anchor="middle">GND</text><text transform="translate(840 603) rotate(0) scale(0.9 1)" x="0" y="4.4" font-size="12.2" fill="#ecc9c9" text-anchor="middle">2</text><text transform="translate(840 613.3) rotate(0) scale(0.9 1)" x="0" y="4.4" font-size="12.2" fill="#ecc9c9" text-anchor="middle">VCC</text><text transform="translate(1244 469.5) rotate(0) scale(0.9 1)" x="0" y="4.4" font-size="12.2" fill="#ecc9c9" text-anchor="middle">1</text><text transform="translate(1244 479.8) rotate(0) scale(0.9 1)" x="0" y="4.4" font-size="12.2" fill="#ecc9c9" text-anchor="middle">PA5</text><text transform="translate(1244 540) rotate(0) scale(0.9 1)" x="0" y="4.4" font-size="12.2" fill="#ecc9c9" text-anchor="middle">3</text><text transform="translate(1244 550.3) rotate(0) scale(0.9 1)" x="0" y="4.4" font-size="12.2" fill="#ecc9c9" text-anchor="middle">PA4</text><text transform="translate(1244 610.5) rotate(0) scale(0.9 1)" x="0" y="4.4" font-size="12.2" fill="#ecc9c9" text-anchor="middle">5</text><text transform="translate(1244 620.8) rotate(0) scale(0.9 1)" x="0" y="4.4" font-size="12.2" fill="#ecc9c9" text-anchor="middle">PB3</text><text transform="translate(1396 469.5) rotate(0) scale(0.9 1)" x="0" y="4.4" font-size="12.2" fill="#ecc9c9" text-anchor="middle">2</text><text transform="translate(1396 479.8) rotate(0) scale(0.9 1)" x="0" y="4.4" font-size="12.2" fill="#ecc9c9" text-anchor="middle">VCC</text><text transform="translate(1396 540) rotate(0) scale(0.9 1)" x="0" y="4.4" font-size="12.2" fill="#ecc9c9" text-anchor="middle">4</text><text transform="translate(1396 550.3) rotate(0) scale(0.9 1)" x="0" y="4.4" font-size="12.2" fill="#ecc9c9" text-anchor="middle">PA6</text><text transform="translate(1396 610.5) rotate(0) scale(0.9 1)" x="0" y="4.4" font-size="12.2" fill="#ecc9c9" text-anchor="middle">6</text><text transform="translate(1396 620.8) rotate(0) scale(0.9 1)" x="0" y="4.4" font-size="12.2" fill="#ecc9c9" text-anchor="middle">GND</text><text transform="translate(1116.5 768) rotate(0) scale(0.9 1)" x="0" y="4.4" font-size="12.2" fill="#ecc9c9" text-anchor="middle">1</text><text transform="translate(1116.5 778.3) rotate(0) scale(0.9 1)" x="0" y="4.4" font-size="12.2" fill="#ecc9c9" text-anchor="middle">PB2</text><text transform="translate(1116.5 860.5) rotate(0) scale(0.9 1)" x="0" y="4.4" font-size="12.2" fill="#ecc9c9" text-anchor="middle">2</text><text transform="translate(1116.5 870.8) rotate(0) scale(0.9 1)" x="0" y="4.4" font-size="12.2" fill="#ecc9c9" text-anchor="middle">VCC</text><text transform="translate(1217 710) rotate(0) scale(0.9 1)" x="0" y="4.4" font-size="12.2" fill="#ecc9c9" text-anchor="middle">4</text><text transform="translate(1217 720.3) rotate(0) scale(0.9 1)" x="0" y="4.4" font-size="12.2" fill="#ecc9c9" text-anchor="middle">PB2</text><text transform="translate(1401 716) rotate(0) scale(0.9 1)" x="0" y="4.4" font-size="12.2" fill="#ecc9c9" text-anchor="middle">3</text><text transform="translate(1217 837) rotate(0) scale(0.9 1)" x="0" y="4.4" font-size="12.2" fill="#ecc9c9" text-anchor="middle">2</text><text transform="translate(1217 847.3) rotate(0) scale(0.9 1)" x="0" y="4.4" font-size="12.2" fill="#ecc9c9" text-anchor="middle">GND</text><text transform="translate(1401 843) rotate(0) scale(0.9 1)" x="0" y="4.4" font-size="12.2" fill="#ecc9c9" text-anchor="middle">1</text><text transform="translate(746 199) rotate(0) scale(0.9 1)" x="0" y="4.5" font-size="12.5" fill="#f29a2e" text-anchor="middle">GND</text><text transform="translate(973 199) rotate(0) scale(0.9 1)" x="0" y="4.5" font-size="12.5" fill="#f29a2e" text-anchor="middle">GND</text><text transform="translate(1090 199) rotate(0) scale(0.9 1)" x="0" y="4.5" font-size="12.5" fill="#f29a2e" text-anchor="middle">GND</text><text transform="translate(1206 199) rotate(0) scale(0.9 1)" x="0" y="4.5" font-size="12.5" fill="#f29a2e" text-anchor="middle">GND</text><text transform="translate(651 242) rotate(-90) scale(0.9 1)" x="0" y="4.5" font-size="12.5" fill="#f29a2e" text-anchor="middle">GND</text><text transform="translate(827.3 263.4) rotate(-90) scale(0.9 1)" x="0" y="4.5" font-size="12.5" fill="#f29a2e" text-anchor="middle">GND</text><text transform="translate(1334.2 231.3) rotate(-90) scale(0.9 1)" x="0" y="4.5" font-size="12.5" fill="#f29a2e" text-anchor="middle">GND</text><text transform="translate(1335 308) rotate(-90) scale(0.9 1)" x="0" y="4.5" font-size="12.5" fill="#f29a2e" text-anchor="middle">GND</text><text transform="translate(1335 423) rotate(-90) scale(0.9 1)" x="0" y="4.5" font-size="12.5" fill="#f29a2e" text-anchor="middle">GND</text><text transform="translate(840.6 429) rotate(-90) scale(0.9 1)" x="0" y="4.5" font-size="12.5" fill="#f29a2e" text-anchor="middle">GND</text><text transform="translate(920.5 492) rotate(-90) scale(0.9 1)" x="0" y="4.5" font-size="12.5" fill="#f29a2e" text-anchor="middle">GND</text><text transform="translate(872 517.8) rotate(0) scale(0.9 1)" x="0" y="4.5" font-size="12.5" fill="#f29a2e" text-anchor="middle">GND</text><text transform="translate(1395 508) rotate(0) scale(0.9 1)" x="0" y="4.5" font-size="12.5" fill="#f29a2e" text-anchor="middle">GND</text><text transform="translate(1457 572) rotate(-90) scale(0.9 1)" x="0" y="4.5" font-size="12.5" fill="#f29a2e" text-anchor="middle">GND</text><text transform="translate(1426 615.5) rotate(0) scale(0.9 1)" x="0" y="4.5" font-size="12.5" fill="#f29a2e" text-anchor="middle">GND</text><text transform="translate(1457 697) rotate(-90) scale(0.9 1)" x="0" y="4.5" font-size="12.5" fill="#f29a2e" text-anchor="middle">GND</text><text transform="translate(1365 796) rotate(0) scale(0.9 1)" x="0" y="4.5" font-size="12.5" fill="#f29a2e" text-anchor="middle">GND</text><text transform="translate(970.5 762) rotate(-90) scale(0.9 1)" x="0" y="4.5" font-size="12.5" fill="#f29a2e" text-anchor="middle">GND</text><text transform="translate(1072 818.5) rotate(0) scale(0.9 1)" x="0" y="4.5" font-size="12.5" fill="#f29a2e" text-anchor="middle">GND</text><text transform="translate(1162 831) rotate(45) scale(0.9 1)" x="0" y="4.5" font-size="12.5" fill="#f29a2e" text-anchor="middle">GND</text><text transform="translate(1197 843) rotate(0) scale(0.9 1)" x="0" y="4.5" font-size="12.5" fill="#f29a2e" text-anchor="middle">GND</text><text transform="translate(1241 843) rotate(0) scale(0.9 1)" x="0" y="4.5" font-size="12.5" fill="#f29a2e" text-anchor="middle">GND</text><text transform="translate(793 363) rotate(-90) scale(0.9 1)" x="0" y="4.5" font-size="12.5" fill="#f29a2e" text-anchor="middle">VCC</text><text transform="translate(757 466.5) rotate(0) scale(0.9 1)" x="0" y="4.5" font-size="12.5" fill="#f29a2e" text-anchor="middle">VCC</text><text transform="translate(710 542) rotate(-90) scale(0.9 1)" x="0" y="4.5" font-size="12.5" fill="#f29a2e" text-anchor="middle">VCC</text><text transform="translate(740 608.5) rotate(0) scale(0.9 1)" x="0" y="4.5" font-size="12.5" fill="#f29a2e" text-anchor="middle">VCC</text><text transform="translate(798 608.5) rotate(0) scale(0.9 1)" x="0" y="4.5" font-size="12.5" fill="#f29a2e" text-anchor="middle">VCC</text><text transform="translate(862 608.5) rotate(0) scale(0.9 1)" x="0" y="4.5" font-size="12.5" fill="#f29a2e" text-anchor="middle">VCC</text><text transform="translate(1419 474) rotate(0) scale(0.9 1)" x="0" y="4.5" font-size="12.5" fill="#f29a2e" text-anchor="middle">VCC</text><text transform="translate(1459 492) rotate(45) scale(0.9 1)" x="0" y="4.5" font-size="12.5" fill="#f29a2e" text-anchor="middle">VCC</text><text transform="translate(1480 623) rotate(-90) scale(0.9 1)" x="0" y="4.5" font-size="12.5" fill="#f29a2e" text-anchor="middle">VCC</text><text transform="translate(1480 733) rotate(-90) scale(0.9 1)" x="0" y="4.5" font-size="12.5" fill="#f29a2e" text-anchor="middle">VCC</text><text transform="translate(1457 868) rotate(-45) scale(0.9 1)" x="0" y="4.5" font-size="12.5" fill="#f29a2e" text-anchor="middle">VCC</text><text transform="translate(1309 890.5) rotate(0) scale(0.9 1)" x="0" y="4.5" font-size="12.5" fill="#f29a2e" text-anchor="middle">VCC</text><text transform="translate(1040 866) rotate(0) scale(0.9 1)" x="0" y="4.5" font-size="12.5" fill="#f29a2e" text-anchor="middle">VCC</text><text transform="translate(1139 869) rotate(0) scale(0.9 1)" x="0" y="4.5" font-size="12.5" fill="#f29a2e" text-anchor="middle">VCC</text><text transform="translate(900 805) rotate(45) scale(0.9 1)" x="0" y="4.5" font-size="12.5" fill="#f29a2e" text-anchor="middle">VCC</text><text transform="translate(840.6 676) rotate(-90) scale(0.9 1)" x="0" y="4.5" font-size="12.5" fill="#f29a2e" text-anchor="middle">VCC</text><text transform="translate(866 313) rotate(-90) scale(0.9 1)" x="0" y="4.5" font-size="12.5" fill="#f29a2e" text-anchor="middle">PA0</text><text transform="translate(913 372) rotate(0) scale(0.9 1)" x="0" y="4.5" font-size="12.5" fill="#f29a2e" text-anchor="middle">PA0</text><text transform="translate(955.5 430) rotate(-90) scale(0.9 1)" x="0" y="4.5" font-size="12.5" fill="#f29a2e" text-anchor="middle">PA0</text><text transform="translate(934.5 304) rotate(-90) scale(0.9 1)" x="0" y="4.5" font-size="12.5" fill="#f29a2e" text-anchor="middle">PA1</text><text transform="translate(990.5 422) rotate(-90) scale(0.9 1)" x="0" y="4.5" font-size="12.5" fill="#f29a2e" text-anchor="middle">PA1</text><text transform="translate(1091 270) rotate(-90) scale(0.9 1)" x="0" y="4.5" font-size="12.5" fill="#f29a2e" text-anchor="middle">PA2</text><text transform="translate(1059.5 324) rotate(-45) scale(0.9 1)" x="0" y="4.5" font-size="12.5" fill="#f29a2e" text-anchor="middle">PA2</text><text transform="translate(1026 414) rotate(-90) scale(0.9 1)" x="0" y="4.5" font-size="12.5" fill="#f29a2e" text-anchor="middle">PA2</text><text transform="translate(1094 378) rotate(-90) scale(0.9 1)" x="0" y="4.5" font-size="12.5" fill="#f29a2e" text-anchor="middle">PA3</text><text transform="translate(1079 413.5) rotate(-45) scale(0.9 1)" x="0" y="4.5" font-size="12.5" fill="#f29a2e" text-anchor="middle">PA3</text><text transform="translate(1062 450) rotate(-90) scale(0.9 1)" x="0" y="4.5" font-size="12.5" fill="#f29a2e" text-anchor="middle">PA3</text><text transform="translate(1097 490) rotate(-90) scale(0.9 1)" x="0" y="4.5" font-size="12.5" fill="#f29a2e" text-anchor="middle">PA4</text><text transform="translate(1142 523) rotate(0) scale(0.9 1)" x="0" y="4.5" font-size="12.5" fill="#f29a2e" text-anchor="middle">PA4</text><text transform="translate(1219 545.5) rotate(0) scale(0.9 1)" x="0" y="4.5" font-size="12.5" fill="#f29a2e" text-anchor="middle">PA4</text><text transform="translate(1188 474) rotate(0) scale(0.9 1)" x="0" y="4.5" font-size="12.5" fill="#f29a2e" text-anchor="middle">PA5</text><text transform="translate(1368 544.5) rotate(0) scale(0.9 1)" x="0" y="4.5" font-size="12.5" fill="#f29a2e" text-anchor="middle">PA6</text><text transform="translate(1323 597) rotate(-90) scale(0.9 1)" x="0" y="4.5" font-size="12.5" fill="#f29a2e" text-anchor="middle">PA6</text><text transform="translate(1236 657) rotate(0) scale(0.9 1)" x="0" y="4.5" font-size="12.5" fill="#f29a2e" text-anchor="middle">PA6</text><text transform="translate(1153 634) rotate(45) scale(0.9 1)" x="0" y="4.5" font-size="12.5" fill="#f29a2e" text-anchor="middle">PA6</text><text transform="translate(902 562) rotate(0) scale(0.9 1)" x="0" y="4.5" font-size="12.5" fill="#f29a2e" text-anchor="middle">PB3</text><text transform="translate(1089 562) rotate(0) scale(0.9 1)" x="0" y="4.5" font-size="12.5" fill="#f29a2e" text-anchor="middle">PB3</text><text transform="translate(1026 590) rotate(-90) scale(0.9 1)" x="0" y="4.5" font-size="12.5" fill="#f29a2e" text-anchor="middle">PB3</text><text transform="translate(1215 615.5) rotate(0) scale(0.9 1)" x="0" y="4.5" font-size="12.5" fill="#f29a2e" text-anchor="middle">PB3</text><text transform="translate(934 703) rotate(-90) scale(0.9 1)" x="0" y="4.5" font-size="12.5" fill="#f29a2e" text-anchor="middle">PB0</text><text transform="translate(989.5 636) rotate(-90) scale(0.9 1)" x="0" y="4.5" font-size="12.5" fill="#f29a2e" text-anchor="middle">PB1</text><text transform="translate(1009.5 700) rotate(-90) scale(0.9 1)" x="0" y="4.5" font-size="12.5" fill="#f29a2e" text-anchor="middle">PB1</text><text transform="translate(1062 661) rotate(-90) scale(0.9 1)" x="0" y="4.5" font-size="12.5" fill="#f29a2e" text-anchor="middle">PB2</text><text transform="translate(1090 746) rotate(45) scale(0.9 1)" x="0" y="4.5" font-size="12.5" fill="#f29a2e" text-anchor="middle">PB2</text><text transform="translate(1147 773.5) rotate(0) scale(0.9 1)" x="0" y="4.5" font-size="12.5" fill="#f29a2e" text-anchor="middle">PB2</text><text transform="translate(1203 757) rotate(-45) scale(0.9 1)" x="0" y="4.5" font-size="12.5" fill="#f29a2e" text-anchor="middle">PB2</text><text transform="translate(1209 248.5) rotate(0) scale(0.9 1)" x="0" y="4.5" font-size="12.5" fill="#f29a2e" text-anchor="middle">N$4</text><text transform="translate(1213 360.5) rotate(0) scale(0.9 1)" x="0" y="4.5" font-size="12.5" fill="#f29a2e" text-anchor="middle">N$3</text></g></svg>
<div class="vtab" style="top:158px;height:146px"><svg class="abs" style="left:5px;top:8px" width="17" height="17"><rect width="17" height="17" rx="2" fill="#1f9a48"/><rect x="4.5" y="5" width="8" height="7" fill="none" stroke="#e8e84a" stroke-width="1.6"/><path d="M6 3v2M8.5 3v2M11 3v2M6 12v2M8.5 12v2M11 12v2" stroke="#e8e84a" stroke-width="1"/></svg><span style="top:32px">MANUFACTURING</span></div><div class="vtab" style="top:320px;height:146px"><svg class="abs" style="left:5px;top:19px" width="17" height="17"><rect width="17" height="17" rx="2" fill="#f0a323"/><path d="M6 13V4.5h6.5M6 8.5h5" fill="none" stroke="#5a4a30" stroke-width="2.2"/></svg><span style="top:48px">FUSION 360</span></div><div class="vtab" style="top:481px;height:146px"><svg class="abs" style="left:5px;top:19px" width="17" height="17"><rect width="17" height="17" rx="2" fill="#f0a323"/><path d="M6 13V4.5h6.5M6 8.5h5" fill="none" stroke="#5a4a30" stroke-width="2.2"/></svg><span style="top:46px">FUSION TEAM</span></div>
<div class="frame"></div>
</div>
</body></html>
